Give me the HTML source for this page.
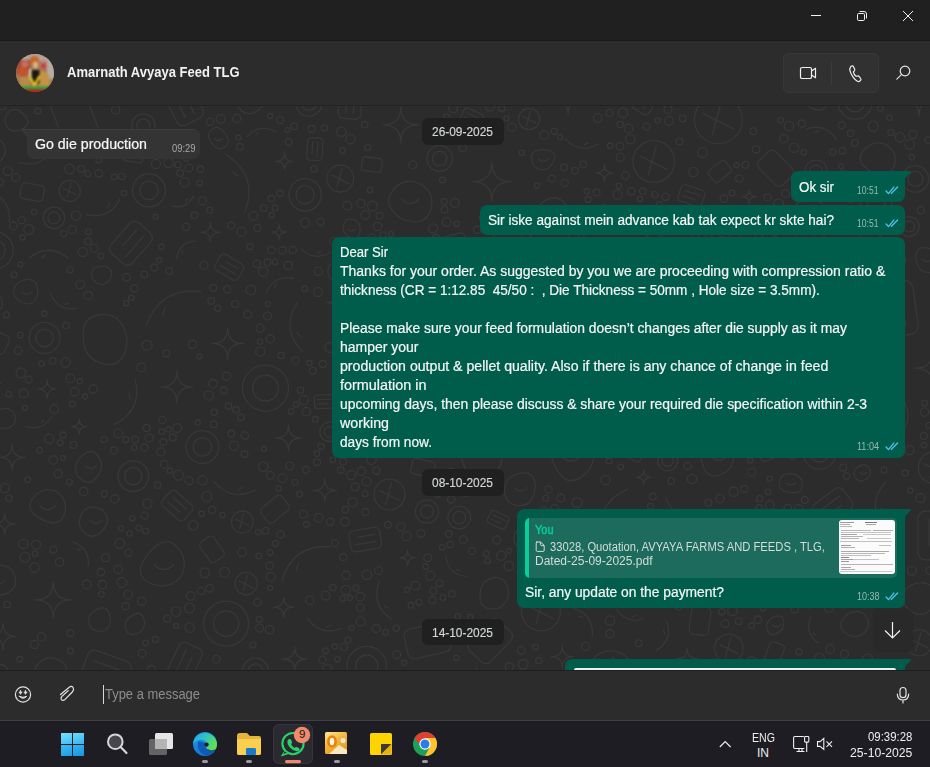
<!DOCTYPE html>
<html><head><meta charset="utf-8">
<style>
*{margin:0;padding:0;box-sizing:border-box}
html,body{width:930px;height:767px;overflow:hidden;background:#2b2b2b;font-family:"Liberation Sans",sans-serif;color:#e9edef;position:relative}
.a{position:absolute}
.t{position:absolute;white-space:pre;line-height:1;transform-origin:0 0}
.out{position:absolute;background:#005c4b;border-radius:7px}
.pill{position:absolute;background:#202020;border-radius:6px}
svg{position:absolute;overflow:visible}
</style></head>
<body>
<!-- title bar -->
<div class="a" style="left:0;top:0;width:930px;height:40px;background:#202020"></div>
<div class="a" style="left:0;top:40px;width:930px;height:1px;background:#1a1a1a"></div>
<svg style="left:0;top:0" width="930" height="40">
  <path d="M811 15.5 H821" stroke="#f2f2f2" stroke-width="1" fill="none"/>
  <rect x="857.5" y="13.5" width="7" height="7" rx="1.2" stroke="#f2f2f2" stroke-width="1" fill="none"/>
  <path d="M859.5 11.5 H864 Q866.5 11.5 866.5 14 V18.5" stroke="#f2f2f2" stroke-width="1" fill="none"/>
  <path d="M903 11 L913 21 M913 11 L903 21" stroke="#f2f2f2" stroke-width="1" fill="none"/>
</svg>

<!-- header -->
<div class="a" style="left:0;top:41px;width:930px;height:64px;background:#2c2c2c"></div>
<div class="a" style="left:0;top:105px;width:930px;height:1px;background:#222222"></div>
<div class="a" style="left:15.9px;top:53.5px;width:38.6px;height:38.6px;border-radius:50%;overflow:hidden;background:#9a7048">
  <svg style="left:0;top:0;filter:blur(0.9px)" width="39" height="39" viewBox="0 0 39 39">
    <rect x="-2" y="-2" width="43" height="43" fill="#a07a52"/>
    <rect x="-2" y="-2" width="43" height="9" fill="#b0a49a"/>
    <rect x="31" y="3" width="8" height="22" fill="#b4aca4"/>
    <rect x="0" y="6" width="14" height="14" fill="#a84c34"/>
    <circle cx="9" cy="10" r="3.5" fill="#c87060"/>
    <circle cx="7" cy="18" r="5" fill="#c2542e"/>
    <ellipse cx="18.5" cy="6" rx="4.5" ry="4" fill="#c8642c"/>
    <ellipse cx="19.5" cy="11" rx="2.5" ry="3.5" fill="#dcb488"/>
    <rect x="24" y="7" width="7" height="8" fill="#c47468"/>
    <circle cx="27.5" cy="12" r="2.5" fill="#b84040"/>
    <rect x="4" y="23" width="10" height="10" fill="#b88c48"/>
    <path d="M23 17 Q33 16 34 26 Q35 33 28 34 L23 34 Z" fill="#c49444"/>
    <rect x="13" y="15" width="2.6" height="8" fill="#e4d4c0"/>
    <path d="M15.5 16 H23.5 V29 Q19.5 31 15.5 29 Z" fill="#1c1610"/>
    <path d="M14 22.5 L18.4 31.5 L23.6 22" stroke="#e4c424" stroke-width="2.6" fill="none"/>
    <rect x="0" y="32" width="39" height="3.4" fill="#3e9c3e"/>
    <rect x="0" y="35.3" width="39" height="4" fill="#b81c1c"/>
  </svg>
</div>
<div class="a" style="left:783px;top:53px;width:96px;height:40px;background:#313131;border-radius:5px;border:1px solid #373737"></div>
<div class="a" style="left:831px;top:61px;width:1px;height:24px;background:#3c3c3c"></div>
<svg style="left:0;top:0" width="930" height="100">
  <rect x="800.5" y="67.5" width="11" height="11" rx="1.6" stroke="#f0f0f0" stroke-width="1.2" fill="none"/>
  <path d="M811.5 71 L815.5 68.3 V77.7 L811.5 75" stroke="#f0f0f0" stroke-width="1.2" fill="none" stroke-linejoin="round"/>
  <path transform="translate(849,65.3)" d="M2.6,0.7 C3.4,0.4 4.2,0.8 4.6,1.6 L5.6,3.8 C5.9,4.5 5.7,5.3 5.2,5.8 L4.4,6.5 C4.6,7.9 6.1,10.4 7.3,11.1 L8.4,10.7 C9.1,10.5 9.8,10.7 10.2,11.3 L11.6,13.2 C12.1,13.9 12,14.8 11.4,15.3 L10.9,15.7 C10.2,16.3 9.2,16.4 8.4,16 C5.5,14.6 2.2,9.6 1.1,5.9 C0.6,4.3 0.9,2.4 1.9,1.1 Z" stroke="#f0f0f0" stroke-width="1.2" fill="none"/>
  <circle cx="905" cy="71" r="4.8" stroke="#e8e8e8" stroke-width="1.2" fill="none"/>
  <path d="M901.6 74.4 L896.8 79.2" stroke="#e8e8e8" stroke-width="1.1" stroke-linecap="round"/>
</svg>

<!-- chat area -->
<div class="a" style="left:0;top:106px;width:930px;height:564px;background:#2c2c2c"></div>
<svg style="left:0;top:106px;overflow:hidden" width="930" height="564"><g fill="none" stroke="#383838" stroke-width="1.3" stroke-linecap="round" stroke-linejoin="round"><circle cx="133.3" cy="370.1" r="15.3"/><circle cx="133.3" cy="370.1" r="8.6"/><rect x="461.4" y="4.6" width="21.2" height="14.6" rx="3.3" transform="rotate(25 472.1 11.9)"/><path d="M465.0 9.5 H479.1 M465.0 14.3 H476.3" transform="rotate(25 472.1 11.9)"/><rect x="758.4" y="50.6" width="34.1" height="23.5" rx="5.3" transform="rotate(226 775.5 62.3)"/><circle cx="366.8" cy="560.1" r="19.8"/><circle cx="366.8" cy="560.1" r="11.1"/><path d="M96.2 161.3 Q101.8 158.8 107.2 161.3 Q112.6 163.8 111.4 169.3 Q110.2 174.8 106.1 177.2 Q102.0 179.6 97.5 177.5 Q93.0 175.4 91.8 169.6 Q90.6 163.8 96.2 161.3Z"/><path d="M288.4 319.1 Q288.4 332.0 301.3 332.0 Q288.4 332.0 288.4 344.8 Q288.4 332.0 275.6 332.0 Q288.4 332.0 288.4 319.1Z"/><path d="M654.0 114.9 Q654.0 132.6 671.7 132.6 Q654.0 132.6 654.0 150.2 Q654.0 132.6 636.4 132.6 Q654.0 132.6 654.0 114.9Z"/><path d="M83.7 222.9 Q85.9 210.1 100.7 208.5 Q115.5 206.8 122.7 219.5 Q129.9 232.2 125.0 246.4 Q120.0 260.6 105.8 258.3 Q91.5 256.1 86.5 245.9 Q81.5 235.6 83.7 222.9Z"/><path d="M516.2 260.5 Q537.6 236.6 565.6 252.3"/><path d="M531.0 258.1 L535.3 253.3"/><path d="M61.8 390.4 Q67.7 398.2 64.1 408.5 Q60.6 418.8 50.6 416.5 Q40.6 414.3 33.7 407.7 Q26.8 401.2 32.2 393.1 Q37.6 385.0 46.8 383.8 Q55.9 382.6 61.8 390.4Z"/><path d="M39.7 399.7 Q47.6 407.7 55.6 399.7"/><rect x="709.2" y="58.2" width="21.3" height="14.6" rx="3.3" transform="rotate(141 719.8 65.5)"/><path d="M425.7 300.5 Q425.1 318.1 407.7 321.3"/><path d="M420.3 306.7 L420.2 310.2"/><path d="M395.1 214.2 Q372.8 208.0 374.0 184.8"/><path d="M388.8 205.4 L384.3 204.2"/><path d="M210.4 116.7 Q210.4 126.3 219.9 126.3 Q210.4 126.3 210.4 135.8 Q210.4 126.3 200.8 126.3 Q210.4 126.3 210.4 116.7Z"/><rect x="-20.3" y="224.9" width="28.4" height="19.6" rx="4.4" transform="rotate(204 -6.1 234.7)"/><path d="M501.5 348.5 Q503.4 361.0 492.9 368.3 Q482.5 375.5 472.8 369.2 Q463.1 362.9 462.0 352.6 Q460.8 342.4 469.3 337.9 Q477.8 333.3 488.7 334.7 Q499.7 336.0 501.5 348.5Z"/><circle cx="54.0" cy="111.9" r="10.7"/><circle cx="54.0" cy="111.9" r="6.0"/><rect x="124.1" y="42.7" width="19.2" height="13.2" rx="3.0" transform="rotate(9 133.7 49.3)"/><rect x="110.7" y="123.3" width="40.8" height="28.1" rx="6.4" transform="rotate(131 131.1 137.3)"/><path d="M117.5 132.6 H144.7 M117.5 142.0 H139.3" transform="rotate(131 131.1 137.3)"/><path d="M933.4 243.7 Q933.4 262.1 951.9 262.1 Q933.4 262.1 933.4 280.5 Q933.4 262.1 915.0 262.1 Q933.4 262.1 933.4 243.7Z"/><path d="M329.6 146.7 Q313.9 155.9 301.4 142.6"/><path d="M321.1 145.4 L318.0 147.3"/><path d="M491.8 55.9 Q491.8 75.6 511.6 75.6 Q491.8 75.6 491.8 95.4 Q491.8 75.6 472.1 75.6 Q491.8 75.6 491.8 55.9Z"/><path d="M903.8 497.8 Q898.6 489.7 906.1 482.8 Q913.6 475.9 923.8 477.0 Q934.0 478.2 935.2 488.0 Q936.5 497.8 930.6 503.7 Q924.6 509.7 916.8 507.8 Q909.0 505.9 903.8 497.8Z"/><path d="M792.2 482.0 Q780.4 476.3 780.6 464.7 Q780.9 453.2 788.9 446.8 Q797.0 440.4 807.9 443.1 Q818.8 445.9 820.4 457.7 Q822.0 469.5 813.0 478.5 Q804.0 487.6 792.2 482.0Z"/><rect x="870.3" y="184.4" width="54.0" height="37.1" rx="8.4" transform="rotate(82 897.3 202.9)"/><path d="M879.3 196.8 H915.2 M879.3 209.1 H908.0" transform="rotate(82 897.3 202.9)"/><path d="M573.4 502.3 Q593.7 508.2 592.3 529.3"/><path d="M579.1 510.4 L583.1 511.6"/><path d="M733.2 408.9 Q733.2 428.1 752.4 428.1 Q733.2 428.1 733.2 447.3 Q733.2 428.1 714.0 428.1 Q733.2 428.1 733.2 408.9Z"/><path d="M282.0 474.8 Q292.2 438.6 329.8 440.6"/><path d="M296.3 464.5 L298.4 457.3"/><path d="M143.3 511.6 Q146.3 517.9 142.9 522.8 Q139.5 527.7 133.8 528.4 Q128.0 529.2 126.0 524.0 Q124.0 518.9 126.4 514.9 Q128.8 510.9 134.6 508.1 Q140.3 505.4 143.3 511.6Z"/><rect x="469.2" y="520.8" width="42.1" height="28.9" rx="6.6" transform="rotate(314 490.3 535.2)"/><rect x="215.9" y="151.9" width="26.6" height="18.3" rx="4.2" transform="rotate(211 229.2 161.1)"/><path d="M220.4 158.0 H238.1 M220.4 164.1 H234.6" transform="rotate(211 229.2 161.1)"/><circle cx="495.2" cy="295.7" r="18.4"/><circle cx="495.2" cy="295.7" r="10.4"/><path d="M749.2 83.4 Q749.2 90.7 756.5 90.7 Q749.2 90.7 749.2 97.9 Q749.2 90.7 742.0 90.7 Q749.2 90.7 749.2 83.4Z"/><path d="M883.1 420.8 Q866.4 397.3 885.8 375.9"/><path d="M883.9 407.3 L880.6 402.6"/><path d="M227.7 32.3 Q229.7 37.4 224.9 40.9 Q220.1 44.4 215.8 41.2 Q211.5 38.1 209.1 32.9 Q206.7 27.7 211.8 23.5 Q216.9 19.4 221.3 23.3 Q225.8 27.3 227.7 32.3Z"/><path d="M214.5 32.7 Q218.6 36.8 222.7 32.7"/><path d="M385.8 302.5 Q346.0 288.5 350.9 246.6"/><path d="M375.3 285.8 L367.4 282.9"/><circle cx="479.8" cy="188.0" r="17.2"/><path d="M469.1 183.7 L490.6 194.5 M475.5 198.8 L482.0 175.1"/><path d="M56.6 577.4 Q49.2 579.5 40.3 576.4 Q31.4 573.3 34.7 564.3 Q38.0 555.2 45.6 552.7 Q53.1 550.3 60.4 554.4 Q67.6 558.5 65.9 566.9 Q64.1 575.3 56.6 577.4Z"/><path d="M226.4 48.7 Q258.5 69.8 244.9 105.8"/><path d="M232.0 65.8 L238.4 70.0"/><path d="M53.3 475.4 Q53.3 493.9 71.8 493.9 Q53.3 493.9 53.3 512.4 Q53.3 493.9 34.8 493.9 Q53.3 493.9 53.3 475.4Z"/><circle cx="870.3" cy="146.4" r="19.3"/><circle cx="870.3" cy="146.4" r="10.9"/><circle cx="143.4" cy="19.4" r="11.5"/><circle cx="143.4" cy="19.4" r="6.5"/><circle cx="265.5" cy="282.1" r="23.0"/><circle cx="265.5" cy="282.1" r="12.9"/><path d="M4.6 407.6 Q4.6 418.1 15.1 418.1 Q4.6 418.1 4.6 428.6 Q4.6 418.1 -5.9 418.1 Q4.6 418.1 4.6 407.6Z"/><path d="M862.9 45.2 Q868.9 37.6 877.7 36.9 Q886.4 36.2 892.0 43.8 Q897.5 51.4 893.6 61.2 Q889.7 71.0 879.9 68.8 Q870.1 66.7 863.5 59.7 Q857.0 52.8 862.9 45.2Z"/><rect x="572.1" y="211.2" width="44.1" height="30.3" rx="6.9" transform="rotate(20 594.2 226.3)"/><path d="M579.5 221.3 H608.9 M579.5 231.4 H603.0" transform="rotate(20 594.2 226.3)"/><path d="M398.7 139.3 Q417.1 131.9 428.3 148.2"/><path d="M407.6 141.9 L411.3 140.5"/><circle cx="-5.3" cy="144.3" r="18.5"/><circle cx="-5.3" cy="144.3" r="10.4"/><path d="M279.0 118.5 Q279.0 126.0 286.5 126.0 Q279.0 126.0 279.0 133.5 Q279.0 126.0 271.5 126.0 Q279.0 126.0 279.0 118.5Z"/><path d="M601.6 433.5 Q594.4 397.7 627.8 382.8"/><path d="M609.4 418.3 L608.0 411.1"/><path d="M784.1 307.5 Q789.0 309.1 793.0 313.2 Q797.1 317.3 793.3 322.6 Q789.5 327.8 783.5 326.7 Q777.5 325.6 774.9 320.4 Q772.4 315.2 775.8 310.5 Q779.2 305.9 784.1 307.5Z"/><circle cx="242.3" cy="415.9" r="10.9"/><path d="M235.5 413.2 L249.1 420.0 M239.6 422.8 L243.6 407.7"/><path d="M719.6 369.1 Q709.1 372.6 704.2 362.7 Q699.2 352.7 702.2 342.6 Q705.2 332.4 715.1 333.8 Q725.0 335.3 730.2 341.8 Q735.4 348.3 732.7 356.9 Q730.0 365.5 719.6 369.1Z"/><path d="M710.5 350.3 Q718.6 358.4 726.7 350.3"/><circle cx="919.2" cy="536.8" r="13.1"/><path d="M911.0 533.5 L927.4 541.7 M915.9 545.0 L920.9 526.9"/><path d="M135.2 273.6 Q142.6 304.5 114.1 318.5"/><path d="M128.9 287.1 L130.4 293.2"/><rect x="814.0" y="388.0" width="37.1" height="25.5" rx="5.8" transform="rotate(323 832.5 400.7)"/><path d="M820.1 396.5 H844.9 M820.1 405.0 H839.9" transform="rotate(323 832.5 400.7)"/><path d="M-6.6 269.6 Q-6.6 277.2 0.9 277.2 Q-6.6 277.2 -6.6 284.7 Q-6.6 277.2 -14.1 277.2 Q-6.6 277.2 -6.6 269.6Z"/><path d="M52.4 42.2 Q41.6 62.7 19.3 56.6"/><path d="M42.5 46.5 L40.3 50.6"/><path d="M893.9 289.7 Q906.9 293.6 907.9 307.6 Q908.9 321.7 897.6 327.6 Q886.3 333.5 877.0 328.1 Q867.7 322.6 861.4 310.4 Q855.1 298.3 868.0 292.1 Q880.8 285.9 893.9 289.7Z"/><path d="M874.0 310.7 Q883.7 320.4 893.3 310.7"/><circle cx="149.0" cy="84.4" r="16.5"/><circle cx="149.0" cy="84.4" r="9.3"/><rect x="837.5" y="562.7" width="26.9" height="18.5" rx="4.2" transform="rotate(50 850.9 571.9)"/><path d="M842.0 568.9 H859.9 M842.0 575.0 H856.3" transform="rotate(50 850.9 571.9)"/><rect x="303.7" y="35.5" width="22.4" height="15.4" rx="3.5" transform="rotate(93 314.9 43.2)"/><path d="M307.4 40.6 H322.3 M307.4 45.8 H319.3" transform="rotate(93 314.9 43.2)"/><rect x="677.0" y="213.7" width="50.4" height="34.7" rx="7.9" transform="rotate(189 702.2 231.1)"/><path d="M685.4 225.3 H719.0 M685.4 236.8 H712.3" transform="rotate(189 702.2 231.1)"/><path d="M29.5 151.7 Q49.3 136.5 68.4 152.5"/><path d="M41.2 151.9 L45.1 148.9"/><rect x="789.0" y="101.9" width="41.4" height="28.4" rx="6.5" transform="rotate(89 809.7 116.1)"/><path d="M795.9 111.4 H823.5 M795.9 120.9 H818.0" transform="rotate(89 809.7 116.1)"/><path d="M840.9 249.8 Q840.9 266.4 857.5 266.4 Q840.9 266.4 840.9 283.0 Q840.9 266.4 824.3 266.4 Q840.9 266.4 840.9 249.8Z"/><path d="M870.7 492.8 Q854.0 472.3 870.3 451.5"/><path d="M870.6 480.4 L867.2 476.3"/><circle cx="653.7" cy="55.5" r="20.8"/><path d="M640.7 50.3 L666.7 63.3 M648.5 68.5 L656.3 39.9"/><circle cx="202.4" cy="341.0" r="16.4"/><circle cx="202.4" cy="341.0" r="9.2"/><path d="M255.1 384.2 Q230.8 396.3 213.6 375.2"/><path d="M242.7 381.5 L237.8 384.0"/><circle cx="389.5" cy="388.6" r="15.5"/><path d="M379.8 384.7 L399.2 394.5 M385.6 398.3 L391.5 377.0"/><rect x="166.5" y="543.7" width="37.0" height="25.4" rx="5.8" transform="rotate(295 185.0 556.4)"/><path d="M172.6 552.2 H197.3 M172.6 560.6 H192.4" transform="rotate(295 185.0 556.4)"/><path d="M718.9 177.8 Q700.0 167.4 706.0 146.7"/><path d="M715.0 168.5 L711.3 166.4"/><circle cx="915.4" cy="72.9" r="13.3"/><circle cx="915.4" cy="72.9" r="7.5"/><circle cx="305.1" cy="88.8" r="16.2"/><circle cx="305.1" cy="88.8" r="9.1"/><path d="M400.8 0.7 Q400.8 18.8 418.9 18.8 Q400.8 18.8 400.8 36.8 Q400.8 18.8 382.8 18.8 Q400.8 18.8 400.8 0.7Z"/><path d="M146.1 219.9 Q159.6 180.9 200.7 185.6"/><path d="M162.5 209.6 L165.2 201.8"/><circle cx="718.3" cy="13.7" r="23.9"/><path d="M703.4 7.8 L733.3 22.7 M712.4 28.7 L721.3 -4.2"/><rect x="685.8" y="505.0" width="28.2" height="19.4" rx="4.4" transform="rotate(98 699.9 514.8)"/><path d="M247.5 -20.2 Q255.4 -18.8 260.1 -14.6 Q264.7 -10.5 263.3 -3.6 Q261.9 3.4 254.0 6.6 Q246.1 9.9 239.8 3.0 Q233.6 -4.0 236.6 -12.8 Q239.5 -21.6 247.5 -20.2Z"/><path d="M246.2 -7.8 Q251.8 -2.1 257.5 -7.8"/><path d="M176.7 440.7 Q185.8 449.8 184.1 461.5 Q182.4 473.2 171.4 477.9 Q160.4 482.6 148.4 476.2 Q136.3 469.8 142.0 457.9 Q147.7 446.1 157.7 438.9 Q167.6 431.6 176.7 440.7Z"/><path d="M154.1 458.7 Q163.8 468.4 173.5 458.7"/><path d="M527.7 179.2 Q515.8 190.4 502.3 181.3"/><path d="M520.0 179.8 L517.7 182.1"/><path d="M302.9 245.9 Q280.4 223.6 297.1 196.8"/><path d="M301.2 231.1 L296.7 226.7"/><circle cx="610.7" cy="568.7" r="23.8"/><path d="M595.8 562.8 L625.6 577.7 M604.7 583.6 L613.6 550.8"/><path d="M119.9 92.8 Q109.6 114.1 86.6 108.6"/><path d="M109.9 97.6 L107.9 101.8"/><circle cx="728.9" cy="542.3" r="14.2"/><path d="M720.0 538.7 L737.7 547.6 M725.3 551.1 L730.7 531.7"/><circle cx="340.3" cy="72.6" r="13.4"/><path d="M331.9 69.2 L348.7 77.6 M336.9 81.0 L342.0 62.5"/><rect x="162.2" y="-17.8" width="42.1" height="29.0" rx="6.6" transform="rotate(244 183.3 -3.4)"/><path d="M169.2 -8.2 H197.3 M169.2 1.5 H191.7" transform="rotate(244 183.3 -3.4)"/><path d="M392.1 513.5 Q370.6 499.9 379.1 475.9"/><path d="M388.2 502.2 L383.9 499.5"/><path d="M9.5 321.4 Q3.7 323.8 -1.6 320.9 Q-6.9 318.0 -5.8 312.3 Q-4.6 306.7 -0.1 303.8 Q4.5 301.0 9.9 303.6 Q15.2 306.2 15.3 312.7 Q15.3 319.1 9.5 321.4Z"/><path d="M466.1 470.3 Q447.8 468.1 445.9 449.7"/><path d="M460.0 464.1 L456.4 463.7"/><rect x="724.1" y="111.2" width="24.8" height="17.1" rx="3.9" transform="rotate(305 736.5 119.7)"/><circle cx="524.2" cy="432.4" r="10.3"/><circle cx="524.2" cy="432.4" r="5.8"/><path d="M12.2 338.4 Q12.2 351.4 25.2 351.4 Q12.2 351.4 12.2 364.4 Q12.2 351.4 -0.8 351.4 Q12.2 351.4 12.2 338.4Z"/><circle cx="439.6" cy="52.5" r="12.8"/><circle cx="439.6" cy="52.5" r="7.2"/><path d="M803.0 583.3 Q796.6 580.9 793.1 575.1 Q789.7 569.3 794.4 563.7 Q799.2 558.1 804.9 561.1 Q810.6 564.1 814.2 569.1 Q817.7 574.0 813.6 579.9 Q809.4 585.7 803.0 583.3Z"/><circle cx="541.0" cy="505.4" r="19.4"/><path d="M528.9 500.6 L553.1 512.7 M536.2 517.5 L543.5 490.9"/><path d="M426.7 83.0 Q434.7 91.1 430.7 103.9 Q426.6 116.7 413.3 115.9 Q400.0 115.0 392.7 105.2 Q385.3 95.4 391.7 85.8 Q398.2 76.1 408.4 75.5 Q418.7 74.9 426.7 83.0Z"/><path d="M401.5 93.2 Q410.2 101.9 418.8 93.2"/><circle cx="-7.5" cy="197.3" r="10.0"/><circle cx="-7.5" cy="197.3" r="5.6"/><path d="M554.9 126.5 Q544.1 125.7 538.9 119.1 Q533.6 112.5 536.4 104.9 Q539.1 97.4 547.8 93.2 Q556.4 89.1 564.5 96.8 Q572.7 104.5 569.2 116.0 Q565.7 127.4 554.9 126.5Z"/><circle cx="226.1" cy="517.6" r="22.5"/><circle cx="226.1" cy="517.6" r="12.7"/><circle cx="599.5" cy="465.0" r="18.5"/><circle cx="599.5" cy="465.0" r="10.4"/><path d="M37.2 180.1 Q38.9 186.8 36.0 192.7 Q33.0 198.6 26.2 197.7 Q19.4 196.9 15.3 190.9 Q11.3 184.8 16.0 179.1 Q20.8 173.5 28.1 173.4 Q35.4 173.4 37.2 180.1Z"/><path d="M21.7 185.9 Q26.9 191.1 32.0 185.9"/><path d="M597.9 38.2 Q579.3 48.6 565.1 32.6"/><path d="M588.1 36.6 L584.3 38.6"/><path d="M18.2 4.4 Q23.5 7.2 26.6 11.9 Q29.7 16.7 25.4 20.8 Q21.0 25.0 14.6 25.0 Q8.1 24.9 5.8 18.3 Q3.5 11.7 8.2 6.6 Q12.8 1.5 18.2 4.4Z"/><path d="M818.1 536.9 Q804.1 527.0 810.7 511.1"/><path d="M815.9 529.2 L813.1 527.2"/><path d="M294.8 540.9 Q294.8 553.0 306.8 553.0 Q294.8 553.0 294.8 565.0 Q294.8 553.0 282.7 553.0 Q294.8 553.0 294.8 540.9Z"/><path d="M919.0 -24.7 Q919.0 -7.5 936.2 -7.5 Q919.0 -7.5 919.0 9.8 Q919.0 -7.5 901.7 -7.5 Q919.0 -7.5 919.0 -24.7Z"/><path d="M176.7 152.4 Q178.9 136.4 194.9 135.1"/><path d="M182.2 147.2 L182.6 144.0"/><path d="M779.4 375.4 Q780.8 368.8 786.6 367.8 Q792.3 366.7 797.2 369.4 Q802.2 372.1 802.4 378.9 Q802.6 385.7 796.0 386.5 Q789.5 387.3 783.7 384.6 Q778.0 381.9 779.4 375.4Z"/><path d="M786.3 376.7 Q791.0 381.3 795.6 376.7"/><circle cx="658.0" cy="482.7" r="14.9"/><circle cx="658.0" cy="482.7" r="8.4"/><path d="M227.6 221.9 Q227.6 237.4 243.1 237.4 Q227.6 237.4 227.6 252.9 Q227.6 237.4 212.0 237.4 Q227.6 237.4 227.6 221.9Z"/><path d="M533.5 295.5 Q539.8 295.2 543.2 299.6 Q546.5 304.1 545.7 310.4 Q544.8 316.6 538.6 315.9 Q532.5 315.1 528.0 311.6 Q523.6 308.1 525.5 302.0 Q527.3 295.8 533.5 295.5Z"/><path d="M531.6 306.0 Q535.8 310.2 540.1 306.0"/><rect x="83.3" y="549.1" width="46.0" height="31.7" rx="7.2" transform="rotate(20 106.3 564.9)"/><path d="M90.9 559.7 H121.6 M90.9 570.2 H115.5" transform="rotate(20 106.3 564.9)"/><rect x="636.3" y="184.0" width="34.0" height="23.4" rx="5.3" transform="rotate(81 653.3 195.6)"/><path d="M771.6 207.5 Q773.8 188.8 792.6 186.8"/><path d="M777.9 201.3 L778.3 197.6"/><path d="M783.3 514.0 Q784.5 518.9 782.6 522.4 Q780.6 525.9 775.4 528.1 Q770.2 530.3 767.6 524.8 Q765.1 519.2 768.4 515.1 Q771.7 511.0 776.9 510.1 Q782.0 509.1 783.3 514.0Z"/><path d="M772.5 519.0 Q776.5 523.0 780.5 519.0"/><rect x="199.8" y="435.0" width="24.2" height="16.7" rx="3.8" transform="rotate(55 212.0 443.4)"/><path d="M658.6 297.2 Q659.1 303.5 654.9 307.3 Q650.6 311.1 645.4 309.1 Q640.2 307.2 638.0 301.6 Q635.7 296.0 640.9 293.0 Q646.0 290.0 652.0 290.5 Q658.1 290.9 658.6 297.2Z"/><path d="M643.3 300.0 Q648.2 304.9 653.1 300.0"/><path d="M456.8 271.8 Q456.8 280.9 465.9 280.9 Q456.8 280.9 456.8 290.0 Q456.8 280.9 447.7 280.9 Q456.8 280.9 456.8 271.8Z"/><path d="M788.7 256.0 Q788.7 263.3 796.0 263.3 Q788.7 263.3 788.7 270.6 Q788.7 263.3 781.4 263.3 Q788.7 263.3 788.7 256.0Z"/><path d="M560.5 331.3 Q572.9 328.3 584.6 333.3 Q596.2 338.2 594.0 351.3 Q591.8 364.4 580.3 371.7 Q568.8 379.0 560.7 369.0 Q552.6 359.0 550.4 346.6 Q548.2 334.3 560.5 331.3Z"/><path d="M561.5 350.2 Q571.2 359.8 580.8 350.2"/><circle cx="529.1" cy="13.0" r="10.6"/><path d="M522.5 10.4 L535.7 17.0 M526.5 19.6 L530.5 5.1"/><circle cx="441.7" cy="230.9" r="26.9"/><circle cx="441.7" cy="230.9" r="15.1"/><circle cx="816.1" cy="65.3" r="11.2"/><circle cx="816.1" cy="65.3" r="6.3"/><rect x="405.5" y="519.3" width="44.2" height="30.4" rx="6.9" transform="rotate(347 427.6 534.5)"/><path d="M736.5 201.5 Q735.5 195.1 741.6 191.2 Q747.6 187.3 753.6 191.3 Q759.6 195.3 758.9 201.9 Q758.3 208.5 752.9 210.8 Q747.4 213.0 742.5 210.4 Q737.5 207.8 736.5 201.5Z"/><path d="M742.9 202.1 Q747.5 206.7 752.0 202.1"/><rect x="536.8" y="153.6" width="48.5" height="33.3" rx="7.6" transform="rotate(320 561.1 170.2)"/><path d="M544.9 164.7 H577.2 M544.9 175.8 H570.8" transform="rotate(320 561.1 170.2)"/><path d="M401.5 342.7 Q395.6 348.5 387.5 346.5 Q379.4 344.5 378.3 336.6 Q377.2 328.7 382.7 324.6 Q388.2 320.4 395.7 320.6 Q403.2 320.8 405.3 328.9 Q407.4 337.0 401.5 342.7Z"/><path d="M85.4 347.1 Q92.2 343.2 97.1 348.8 Q102.0 354.3 101.5 360.5 Q101.0 366.6 95.0 373.1 Q89.1 379.6 81.3 373.6 Q73.5 367.6 76.0 359.3 Q78.6 351.0 85.4 347.1Z"/><path d="M84.7 359.5 Q90.8 365.6 96.9 359.5"/><path d="M51.5 311.0 Q42.1 326.0 25.4 320.1"/><path d="M43.7 313.7 L41.8 316.7"/><path d="M341.3 522.3 Q320.3 530.7 307.5 512.1"/><path d="M331.2 519.3 L327.0 520.9"/><circle cx="909.1" cy="120.6" r="10.0"/><circle cx="909.1" cy="120.6" r="5.6"/><path d="M592.1 138.4 Q596.7 134.8 601.3 136.8 Q605.8 138.9 607.6 143.4 Q609.4 147.9 605.7 151.3 Q602.0 154.7 596.3 154.4 Q590.6 154.0 589.1 148.0 Q587.6 142.0 592.1 138.4Z"/><path d="M595.7 145.2 Q599.5 149.0 603.3 145.2"/><rect x="361.4" y="148.2" width="29.5" height="20.3" rx="4.6" transform="rotate(32 376.2 158.4)"/><path d="M366.4 155.0 H386.1 M366.4 161.8 H382.1" transform="rotate(32 376.2 158.4)"/><path d="M324.8 372.8 Q324.8 384.4 336.5 384.4 Q324.8 384.4 324.8 396.0 Q324.8 384.4 313.2 384.4 Q324.8 384.4 324.8 372.8Z"/><path d="M806.9 -12.6 Q811.0 -18.0 816.9 -17.7 Q822.8 -17.4 826.8 -12.5 Q830.8 -7.7 827.6 -1.5 Q824.5 4.6 817.8 4.0 Q811.2 3.4 807.0 -1.9 Q802.7 -7.3 806.9 -12.6Z"/><path d="M812.8 -7.5 Q817.3 -3.0 821.7 -7.5"/><circle cx="855.0" cy="-3.8" r="17.1"/><circle cx="855.0" cy="-3.8" r="9.6"/><circle cx="934.1" cy="361.7" r="15.8"/><path d="M924.2 357.8 L943.9 367.7 M930.1 371.6 L936.0 349.9"/><rect x="631.2" y="-18.0" width="30.0" height="20.6" rx="4.7" transform="rotate(303 646.2 -7.7)"/><path d="M636.2 -11.2 H656.2 M636.2 -4.3 H652.2" transform="rotate(303 646.2 -7.7)"/><path d="M176.8 264.7 Q176.8 280.8 192.8 280.8 Q176.8 280.8 176.8 296.8 Q176.8 280.8 160.8 280.8 Q176.8 280.8 176.8 264.7Z"/><path d="M562.4 539.4 Q562.4 550.7 573.6 550.7 Q562.4 550.7 562.4 561.9 Q562.4 550.7 551.2 550.7 Q562.4 550.7 562.4 539.4Z"/><path d="M283.7 491.1 Q283.7 501.2 293.8 501.2 Q283.7 501.2 283.7 511.3 Q283.7 501.2 273.6 501.2 Q283.7 501.2 283.7 491.1Z"/><circle cx="246.2" cy="477.6" r="11.2"/><path d="M239.2 474.8 L253.2 481.9 M243.4 484.7 L247.6 469.2"/><rect x="162.7" y="389.7" width="29.1" height="20.0" rx="4.5" transform="rotate(41 177.3 399.7)"/><path d="M167.6 396.4 H187.0 M167.6 403.1 H183.1" transform="rotate(41 177.3 399.7)"/><path d="M3.0 559.1 Q8.6 561.9 8.6 567.0 Q8.6 572.1 5.5 576.0 Q2.5 580.0 -2.5 578.2 Q-7.5 576.4 -8.0 571.5 Q-8.5 566.6 -5.5 561.4 Q-2.5 556.2 3.0 559.1Z"/><path d="M862.9 359.0 Q867.2 358.7 869.3 362.2 Q871.5 365.7 869.7 369.1 Q867.9 372.5 863.4 374.5 Q858.9 376.5 855.6 371.9 Q852.2 367.4 855.4 363.4 Q858.7 359.4 862.9 359.0Z"/><path d="M859.9 366.4 Q863.6 370.0 867.2 366.4"/><rect x="48.5" y="-5.0" width="53.3" height="36.7" rx="8.3" transform="rotate(69 75.2 13.3)"/><rect x="622.0" y="338.4" width="21.3" height="14.7" rx="3.3" transform="rotate(206 632.6 345.7)"/><circle cx="634.7" cy="251.2" r="12.9"/><circle cx="634.7" cy="251.2" r="7.3"/><path d="M494.2 128.4 Q494.2 136.9 502.7 136.9 Q494.2 136.9 494.2 145.4 Q494.2 136.9 485.8 136.9 Q494.2 136.9 494.2 128.4Z"/><rect x="261.6" y="394.0" width="26.7" height="18.4" rx="4.2" transform="rotate(320 274.9 403.1)"/><circle cx="819.4" cy="346.7" r="16.5"/><circle cx="819.4" cy="346.7" r="9.3"/><path d="M687.2 542.7 Q687.2 552.5 697.0 552.5 Q687.2 552.5 687.2 562.3 Q687.2 552.5 677.4 552.5 Q687.2 552.5 687.2 542.7Z"/><circle cx="44.6" cy="231.9" r="15.5"/><circle cx="44.6" cy="231.9" r="8.7"/><path d="M2.9 517.1 Q2.9 530.4 16.2 530.4 Q2.9 530.4 2.9 543.7 Q2.9 530.4 -10.4 530.4 Q2.9 530.4 2.9 517.1Z"/><path d="M673.5 424.5 Q678.7 430.6 677.2 437.1 Q675.8 443.5 669.8 446.7 Q663.9 449.9 656.9 446.1 Q649.9 442.2 653.3 435.5 Q656.8 428.7 662.5 423.6 Q668.3 418.4 673.5 424.5Z"/><path d="M660.6 435.8 Q665.9 441.1 671.2 435.8"/><path d="M47.2 274.1 Q47.2 283.1 56.1 283.1 Q47.2 283.1 47.2 292.1 Q47.2 283.1 38.2 283.1 Q47.2 283.1 47.2 274.1Z"/><rect x="689.7" y="460.7" width="28.6" height="19.7" rx="4.5" transform="rotate(119 704.0 470.5)"/><path d="M694.4 467.3 H713.5 M694.4 473.8 H709.7" transform="rotate(119 704.0 470.5)"/><circle cx="691.3" cy="282.4" r="12.2"/><circle cx="691.3" cy="282.4" r="6.9"/><path d="M643.7 364.1 Q643.7 371.4 651.1 371.4 Q643.7 371.4 643.7 378.8 Q643.7 371.4 636.4 371.4 Q643.7 371.4 643.7 364.1Z"/><path d="M753.1 282.6 Q753.1 294.5 765.0 294.5 Q753.1 294.5 753.1 306.4 Q753.1 294.5 741.1 294.5 Q753.1 294.5 753.1 282.6Z"/><path d="M496.4 217.5 Q496.4 228.8 507.8 228.8 Q496.4 228.8 496.4 240.2 Q496.4 228.8 485.1 228.8 Q496.4 228.8 496.4 217.5Z"/><path d="M72.7 436.1 Q90.0 441.8 88.2 459.9"/><path d="M77.4 443.2 L80.8 444.4"/><rect x="774.0" y="154.4" width="20.7" height="14.2" rx="3.2" transform="rotate(210 784.3 161.5)"/><path d="M777.4 159.1 H791.2 M777.4 163.9 H788.5" transform="rotate(210 784.3 161.5)"/><path d="M604.5 58.6 Q604.5 67.1 613.0 67.1 Q604.5 67.1 604.5 75.6 Q604.5 67.1 596.0 67.1 Q604.5 67.1 604.5 58.6Z"/><rect x="679.0" y="81.1" width="24.9" height="17.1" rx="3.9" transform="rotate(19 691.4 89.7)"/><path d="M683.1 86.8 H699.7 M683.1 92.5 H696.4" transform="rotate(19 691.4 89.7)"/><path d="M504.9 388.2 Q503.0 378.3 509.2 372.4 Q515.5 366.6 524.3 366.9 Q533.2 367.2 534.7 375.8 Q536.3 384.5 531.9 392.6 Q527.6 400.8 517.2 399.4 Q506.8 398.1 504.9 388.2Z"/><path d="M514.1 381.6 Q520.8 388.3 527.5 381.6"/><path d="M10.1 485.5 Q2.8 490.9 -3.8 487.4 Q-10.5 483.8 -13.0 477.4 Q-15.6 470.9 -10.6 464.5 Q-5.6 458.2 3.4 459.7 Q12.5 461.3 15.0 470.7 Q17.4 480.1 10.1 485.5Z"/><path d="M-7.4 474.9 Q-1.3 481.0 4.8 474.9"/><rect x="595.8" y="102.9" width="23.5" height="16.2" rx="3.7" transform="rotate(40 607.6 111.0)"/><path d="M334.6 156.0 Q341.1 154.0 344.1 158.8 Q347.2 163.6 346.7 168.0 Q346.3 172.3 342.1 174.1 Q337.9 175.9 332.8 173.7 Q327.6 171.4 327.9 164.7 Q328.1 158.1 334.6 156.0Z"/><rect x="910.2" y="412.8" width="48.7" height="33.5" rx="7.6" transform="rotate(90 934.6 429.6)"/><path d="M918.3 424.0 H950.8 M918.3 435.1 H944.3" transform="rotate(90 934.6 429.6)"/><path d="M-10.5 85.7 Q11.5 93.1 9.1 116.2"/><path d="M-4.6 94.8 L-0.2 96.3"/><circle cx="427.0" cy="405.5" r="11.6"/><circle cx="427.0" cy="405.5" r="6.5"/><path d="M776.6 -19.2 Q776.6 -9.9 786.0 -9.9 Q776.6 -9.9 776.6 -0.6 Q776.6 -9.9 767.3 -9.9 Q776.6 -9.9 776.6 -19.2Z"/><path d="M482.9 478.5 Q486.5 472.3 494.9 471.5 Q503.3 470.6 506.9 478.9 Q510.6 487.1 506.0 495.2 Q501.3 503.4 491.3 502.9 Q481.4 502.5 480.3 493.6 Q479.2 484.6 482.9 478.5Z"/><rect x="488.2" y="407.0" width="19.7" height="13.6" rx="3.1" transform="rotate(25 498.1 413.8)"/><path d="M491.5 411.5 H504.7 M491.5 416.0 H502.1" transform="rotate(25 498.1 413.8)"/><circle cx="69.7" cy="84.9" r="10.6"/><path d="M63.1 82.2 L76.3 88.8 M67.1 91.5 L71.1 77.0"/><path d="M537.2 62.2 Q531.6 59.0 531.4 52.1 Q531.3 45.1 537.6 44.1 Q543.9 43.1 550.1 44.8 Q556.2 46.5 554.5 52.8 Q552.7 59.1 547.7 62.3 Q542.7 65.5 537.2 62.2Z"/><path d="M538.5 53.0 Q543.4 57.9 548.2 53.0"/><rect x="411.5" y="354.0" width="22.9" height="15.7" rx="3.6" transform="rotate(13 422.9 361.9)"/><path d="M898.8 564.9 Q898.8 574.0 907.9 574.0 Q898.8 574.0 898.8 583.1 Q898.8 574.0 889.7 574.0 Q898.8 574.0 898.8 564.9Z"/><path d="M90.5 520.3 Q86.9 515.0 90.0 509.6 Q93.0 504.2 99.7 502.3 Q106.4 500.4 109.0 506.9 Q111.5 513.4 109.2 519.2 Q106.9 525.0 100.4 525.3 Q94.0 525.5 90.5 520.3Z"/><path d="M407.6 444.3 Q407.6 451.9 415.2 451.9 Q407.6 451.9 407.6 459.5 Q407.6 451.9 400.0 451.9 Q407.6 451.9 407.6 444.3Z"/><circle cx="459.2" cy="411.5" r="11.3"/><circle cx="459.2" cy="411.5" r="6.4"/><circle cx="876.1" cy="98.2" r="15.6"/><circle cx="876.1" cy="98.2" r="8.8"/><path d="M193.8 89.6 Q186.7 103.6 171.4 99.8"/><path d="M187.1 92.6 L185.6 95.4"/><path d="M266.2 186.1 Q274.7 168.3 294.0 172.7"/><path d="M274.5 182.1 L276.2 178.5"/><rect x="333.9" y="-14.8" width="32.9" height="22.6" rx="5.1" transform="rotate(274 350.3 -3.5)"/><path d="M339.3 -7.3 H361.3 M339.3 0.2 H356.9" transform="rotate(274 350.3 -3.5)"/><path d="M359.2 118.8 Q361.2 123.6 359.0 128.7 Q356.8 133.9 351.7 132.0 Q346.7 130.2 344.4 126.4 Q342.0 122.6 344.0 117.5 Q345.9 112.5 351.6 113.2 Q357.2 114.0 359.2 118.8Z"/><path d="M347.3 123.1 Q351.3 127.0 355.3 123.1"/><circle cx="-8.0" cy="44.6" r="13.3"/><circle cx="-8.0" cy="44.6" r="7.5"/><circle cx="843.6" cy="187.9" r="13.2"/><circle cx="843.6" cy="187.9" r="7.4"/><rect x="443.8" y="128.6" width="22.2" height="15.3" rx="3.5" transform="rotate(166 454.9 136.2)"/><path d="M447.5 133.7 H462.3 M447.5 138.8 H459.3" transform="rotate(166 454.9 136.2)"/><path d="M758.6 499.8 Q734.8 489.9 739.3 464.5"/><path d="M752.8 489.2 L748.1 487.2"/><rect x="586.8" y="273.8" width="33.1" height="22.8" rx="5.2" transform="rotate(218 603.3 285.1)"/><circle cx="308.9" cy="-3.0" r="13.2"/><circle cx="308.9" cy="-3.0" r="7.4"/><rect x="349.9" y="423.0" width="30.9" height="21.2" rx="4.8" transform="rotate(171 365.3 433.6)"/><path d="M355.0 430.1 H375.6 M355.0 437.2 H371.5" transform="rotate(171 365.3 433.6)"/><rect x="20.7" y="78.0" width="23.2" height="15.9" rx="3.6" transform="rotate(190 32.3 86.0)"/><circle cx="562.1" cy="446.6" r="12.1"/><path d="M554.5 443.6 L569.7 451.2 M559.1 454.2 L563.6 437.5"/><path d="M104.0 405.6 Q108.4 410.5 107.0 417.0 Q105.6 423.4 98.2 428.2 Q90.9 433.1 83.9 426.0 Q77.0 419.0 80.4 410.4 Q83.9 401.8 91.7 401.2 Q99.5 400.6 104.0 405.6Z"/><path d="M89.7 413.9 Q96.0 420.2 102.4 413.9"/><path d="M76.1 202.5 Q56.8 204.9 50.2 186.6"/><path d="M68.3 197.7 L64.5 198.2"/><path d="M79.3 313.0 Q79.3 320.5 86.8 320.5 Q79.3 320.5 79.3 328.1 Q79.3 320.5 71.7 320.5 Q79.3 320.5 79.3 313.0Z"/><circle cx="255.5" cy="565.1" r="12.9"/><circle cx="255.5" cy="565.1" r="7.2"/><path d="M568.1 -21.2 Q568.1 -6.6 582.7 -6.6 Q568.1 -6.6 568.1 8.1 Q568.1 -6.6 553.4 -6.6 Q568.1 -6.6 568.1 -21.2Z"/><path d="M666.8 515.4 Q673.0 534.4 655.9 544.7"/><path d="M663.5 524.2 L664.7 528.0"/><path d="M827.4 313.7 Q810.1 316.6 803.5 300.4"/><path d="M820.2 309.7 L816.8 310.3"/><rect x="314.4" y="288.9" width="19.6" height="13.5" rx="3.1" transform="rotate(358 324.2 295.6)"/><path d="M317.6 293.4 H330.7 M317.6 297.9 H328.1" transform="rotate(358 324.2 295.6)"/><path d="M643.8 512.3 Q626.7 518.7 616.7 503.4"/><path d="M635.6 509.6 L632.2 510.9"/><path d="M246.7 31.1 Q259.3 16.8 276.0 26.0"/><path d="M255.5 29.6 L258.0 26.7"/><circle cx="329.4" cy="325.9" r="9.7"/><circle cx="329.4" cy="325.9" r="5.4"/><path d="M806.1 23.0 Q825.4 16.2 836.3 33.6"/><path d="M815.1 26.1 L819.0 24.8"/><rect x="747.7" y="224.9" width="27.3" height="18.7" rx="4.3" transform="rotate(316 761.4 234.3)"/><path d="M752.3 231.2 H770.5 M752.3 237.4 H766.8" transform="rotate(316 761.4 234.3)"/><path d="M476.8 561.3 Q472.0 579.8 452.8 579.2"/><path d="M469.6 566.6 L468.7 570.4"/><path d="M924.4 141.7 Q931.2 142.1 937.3 146.4 Q943.4 150.6 940.5 158.6 Q937.6 166.6 929.6 166.6 Q921.5 166.6 918.2 160.7 Q914.9 154.8 916.2 148.0 Q917.5 141.2 924.4 141.7Z"/><path d="M921.5 153.0 Q926.9 158.4 932.2 153.0"/><path d="M284.5 46.8 Q284.5 55.3 293.1 55.3 Q284.5 55.3 284.5 63.8 Q284.5 55.3 276.0 55.3 Q284.5 55.3 284.5 46.8Z"/><path d="M854.2 505.7 Q861.2 504.4 865.9 510.2 Q870.6 516.0 867.4 522.6 Q864.2 529.3 857.1 530.2 Q850.0 531.2 844.1 525.7 Q838.2 520.1 842.7 513.6 Q847.3 507.1 854.2 505.7Z"/><rect x="427.0" y="156.7" width="27.2" height="18.7" rx="4.2" transform="rotate(282 440.6 166.1)"/><path d="M431.5 163.0 H449.6 M431.5 169.2 H446.0" transform="rotate(282 440.6 166.1)"/><path d="M764.1 174.3 Q748.6 170.7 748.8 154.8"/><path d="M759.5 168.5 L756.4 167.7"/><rect x="361.9" y="51.8" width="20.0" height="13.7" rx="3.1" transform="rotate(7 371.9 58.6)"/><circle cx="667.7" cy="354.8" r="10.0"/><circle cx="667.7" cy="354.8" r="5.6"/><path d="M696.7 411.0 Q673.4 413.6 665.7 391.4"/><path d="M687.4 405.1 L682.8 405.6"/><path d="M334.6 188.4 Q334.6 196.4 342.6 196.4 Q334.6 196.4 334.6 204.4 Q334.6 196.4 326.6 196.4 Q334.6 196.4 334.6 188.4Z"/><rect x="762.9" y="540.3" width="22.8" height="15.7" rx="3.6" transform="rotate(290 774.3 548.2)"/><rect x="755.1" y="336.3" width="21.7" height="14.9" rx="3.4" transform="rotate(252 765.9 343.7)"/><circle cx="275.1" cy="101.9" r="2.9"/><circle cx="898.1" cy="465.8" r="4.6"/><circle cx="420.9" cy="427.5" r="3.9"/><circle cx="370.2" cy="83.9" r="2.8"/><circle cx="526.9" cy="230.5" r="2.6"/><circle cx="288.3" cy="159.5" r="4.2"/><circle cx="23.6" cy="287.4" r="4.4"/><circle cx="23.4" cy="438.0" r="4.7"/><circle cx="0.0" cy="76.2" r="3.4"/><circle cx="41.5" cy="530.9" r="4.2"/><circle cx="511.8" cy="21.2" r="4.1"/><circle cx="446.6" cy="115.9" r="4.3"/><circle cx="65.6" cy="256.3" r="4.8"/><circle cx="501.2" cy="449.7" r="4.7"/><circle cx="34.2" cy="106.0" r="2.8"/><circle cx="271.4" cy="144.0" r="3.7"/><circle cx="304.7" cy="182.8" r="2.9"/><circle cx="28.6" cy="273.6" r="3.5"/><circle cx="84.9" cy="290.5" r="2.5"/><circle cx="464.9" cy="386.2" r="4.2"/><circle cx="357.0" cy="183.5" r="2.5"/><circle cx="472.0" cy="444.8" r="3.5"/><circle cx="80.1" cy="178.5" r="4.4"/><circle cx="830.1" cy="543.2" r="4.3"/><circle cx="188.9" cy="62.0" r="3.9"/><circle cx="652.8" cy="390.4" r="3.3"/><circle cx="325.4" cy="544.8" r="2.9"/><circle cx="759.8" cy="563.9" r="4.0"/><circle cx="650.5" cy="400.3" r="3.0"/><circle cx="180.1" cy="67.0" r="3.4"/><circle cx="442.5" cy="74.0" r="2.9"/><circle cx="891.0" cy="26.5" r="3.1"/><circle cx="442.3" cy="441.4" r="2.8"/><circle cx="168.7" cy="56.9" r="4.8"/><circle cx="160.8" cy="345.9" r="4.1"/><circle cx="726.7" cy="299.5" r="4.8"/><circle cx="332.9" cy="353.9" r="2.8"/><circle cx="352.8" cy="396.3" r="4.7"/><circle cx="685.4" cy="163.7" r="2.5"/><circle cx="615.6" cy="196.3" r="4.9"/><circle cx="256.9" cy="157.9" r="3.8"/><circle cx="169.1" cy="164.9" r="3.3"/><circle cx="176.1" cy="520.0" r="2.5"/><circle cx="442.9" cy="491.5" r="2.8"/><circle cx="13.4" cy="119.9" r="3.9"/><circle cx="294.2" cy="20.3" r="3.3"/><circle cx="324.5" cy="22.0" r="3.1"/><circle cx="422.0" cy="179.4" r="4.1"/><circle cx="411.9" cy="172.7" r="3.5"/><circle cx="433.4" cy="485.0" r="3.4"/><circle cx="738.7" cy="515.2" r="3.3"/><circle cx="664.2" cy="323.9" r="4.6"/><circle cx="632.1" cy="284.0" r="3.0"/><circle cx="709.1" cy="118.3" r="3.3"/><circle cx="53.3" cy="443.8" r="3.4"/><circle cx="296.0" cy="298.6" r="2.7"/><circle cx="646.7" cy="20.6" r="3.5"/><circle cx="124.0" cy="87.0" r="2.7"/><circle cx="384.0" cy="239.4" r="3.2"/><circle cx="544.1" cy="29.2" r="4.4"/><circle cx="81.3" cy="63.1" r="3.4"/><circle cx="538.9" cy="554.5" r="3.2"/><circle cx="884.0" cy="364.0" r="2.9"/><circle cx="407.2" cy="483.7" r="2.6"/><circle cx="316.8" cy="347.7" r="2.8"/><circle cx="553.4" cy="220.6" r="3.4"/><circle cx="21.7" cy="114.2" r="3.5"/><circle cx="841.3" cy="79.5" r="2.9"/><circle cx="487.7" cy="454.9" r="2.8"/><circle cx="693.5" cy="66.0" r="4.6"/><circle cx="573.2" cy="265.2" r="3.1"/><circle cx="605.3" cy="310.5" r="3.0"/><circle cx="126.1" cy="197.3" r="2.6"/><circle cx="436.4" cy="294.6" r="4.4"/><circle cx="675.5" cy="300.9" r="4.5"/><circle cx="259.5" cy="522.1" r="3.9"/><circle cx="770.2" cy="142.6" r="4.4"/><circle cx="850.7" cy="27.2" r="3.2"/><circle cx="98.9" cy="67.3" r="3.7"/><circle cx="269.6" cy="459.7" r="3.7"/><circle cx="680.9" cy="195.6" r="3.5"/><circle cx="69.6" cy="63.0" r="4.9"/><circle cx="329.8" cy="241.5" r="5.0"/><circle cx="499.3" cy="34.0" r="2.5"/><circle cx="263.3" cy="360.6" r="4.8"/><circle cx="761.3" cy="108.4" r="2.6"/><circle cx="278.6" cy="382.5" r="2.7"/><circle cx="270.2" cy="233.0" r="4.0"/><circle cx="178.4" cy="369.3" r="4.9"/><circle cx="258.1" cy="426.0" r="2.7"/><circle cx="226.6" cy="270.2" r="4.1"/><circle cx="199.4" cy="250.4" r="2.5"/><circle cx="34.5" cy="461.5" r="4.7"/><circle cx="691.9" cy="154.8" r="2.6"/><circle cx="762.8" cy="502.4" r="2.6"/><circle cx="618.1" cy="160.1" r="2.7"/><circle cx="75.9" cy="109.5" r="4.6"/><circle cx="18.1" cy="244.6" r="3.8"/><circle cx="841.7" cy="210.5" r="3.8"/><circle cx="433.1" cy="122.3" r="4.5"/><circle cx="586.8" cy="85.3" r="2.8"/><circle cx="600.9" cy="175.7" r="4.1"/><circle cx="833.7" cy="429.8" r="4.0"/><circle cx="69.4" cy="376.3" r="2.9"/><circle cx="241.5" cy="125.7" r="4.5"/><circle cx="610.1" cy="39.8" r="2.8"/><circle cx="654.2" cy="329.5" r="3.4"/><circle cx="159.3" cy="30.0" r="2.6"/><circle cx="15.8" cy="71.6" r="3.9"/><circle cx="376.3" cy="364.8" r="3.7"/><circle cx="361.6" cy="235.1" r="2.6"/><circle cx="778.6" cy="97.7" r="4.9"/><circle cx="214.2" cy="306.3" r="3.1"/><circle cx="270.0" cy="446.5" r="2.7"/><circle cx="920.2" cy="392.1" r="4.6"/><circle cx="911.8" cy="464.6" r="4.5"/><circle cx="155.4" cy="533.5" r="3.1"/><circle cx="630.3" cy="33.1" r="4.7"/><circle cx="535.6" cy="541.1" r="2.8"/><circle cx="532.9" cy="335.7" r="4.3"/><circle cx="408.6" cy="266.0" r="4.7"/><circle cx="391.2" cy="127.9" r="2.5"/><circle cx="376.3" cy="522.5" r="4.0"/><circle cx="134.2" cy="182.3" r="3.7"/><circle cx="628.6" cy="22.4" r="4.4"/><circle cx="479.4" cy="152.6" r="3.3"/><circle cx="176.0" cy="505.5" r="4.8"/><circle cx="539.2" cy="468.4" r="3.3"/><circle cx="618.9" cy="174.1" r="4.0"/><circle cx="875.6" cy="249.9" r="3.5"/><circle cx="383.2" cy="128.8" r="3.0"/><circle cx="204.8" cy="466.8" r="4.8"/><circle cx="824.3" cy="236.4" r="4.4"/><circle cx="176.1" cy="42.5" r="4.7"/><circle cx="501.7" cy="2.5" r="3.1"/><circle cx="783.8" cy="32.7" r="4.2"/><circle cx="49.0" cy="332.8" r="4.6"/><circle cx="517.7" cy="345.5" r="3.8"/><circle cx="36.1" cy="438.6" r="4.5"/><circle cx="896.6" cy="513.0" r="3.3"/><circle cx="554.6" cy="402.6" r="4.0"/><circle cx="924.1" cy="339.1" r="2.7"/><circle cx="202.5" cy="374.2" r="4.6"/><circle cx="813.2" cy="243.6" r="3.9"/><circle cx="841.4" cy="313.0" r="2.7"/><circle cx="144.2" cy="168.6" r="3.4"/><circle cx="113.6" cy="30.3" r="3.2"/><circle cx="739.3" cy="72.6" r="3.7"/><circle cx="74.7" cy="285.8" r="4.2"/><circle cx="881.3" cy="540.3" r="4.7"/><circle cx="279.8" cy="87.3" r="3.2"/><circle cx="669.0" cy="15.0" r="4.4"/><circle cx="432.0" cy="340.2" r="3.0"/><circle cx="462.6" cy="41.7" r="3.7"/><circle cx="692.0" cy="373.0" r="4.7"/><circle cx="63.2" cy="329.0" r="3.0"/><circle cx="318.8" cy="411.8" r="4.4"/><circle cx="312.8" cy="264.8" r="3.5"/><circle cx="683.7" cy="343.3" r="2.5"/><circle cx="666.2" cy="260.5" r="2.9"/><circle cx="100.9" cy="466.2" r="3.7"/><circle cx="839.1" cy="160.5" r="4.0"/><circle cx="244.8" cy="329.6" r="3.8"/><circle cx="721.7" cy="505.8" r="3.1"/><circle cx="874.5" cy="441.9" r="2.9"/><circle cx="688.0" cy="329.8" r="4.6"/><circle cx="66.1" cy="219.6" r="3.2"/><circle cx="891.8" cy="274.9" r="2.6"/><circle cx="768.5" cy="269.5" r="3.2"/><circle cx="898.2" cy="257.1" r="2.5"/><circle cx="751.9" cy="366.2" r="4.0"/><circle cx="470.2" cy="510.9" r="2.6"/><circle cx="222.5" cy="409.1" r="2.7"/><circle cx="342.5" cy="492.7" r="2.7"/><circle cx="345.4" cy="403.8" r="3.3"/><circle cx="234.0" cy="339.8" r="4.7"/><circle cx="719.9" cy="392.6" r="4.2"/><circle cx="186.1" cy="120.8" r="3.7"/><circle cx="20.4" cy="158.5" r="2.5"/><circle cx="346.9" cy="232.5" r="4.6"/><circle cx="521.4" cy="211.0" r="2.5"/><circle cx="808.4" cy="498.9" r="3.1"/><circle cx="538.8" cy="209.7" r="3.2"/><circle cx="343.9" cy="541.0" r="3.7"/><circle cx="224.0" cy="284.3" r="3.3"/><circle cx="59.6" cy="456.1" r="4.2"/><circle cx="905.3" cy="367.1" r="3.1"/><circle cx="610.0" cy="514.5" r="4.7"/><circle cx="121.7" cy="70.4" r="3.2"/><circle cx="365.4" cy="108.9" r="4.3"/><circle cx="583.4" cy="58.4" r="3.3"/><circle cx="209.7" cy="482.3" r="3.7"/><circle cx="613.4" cy="493.7" r="4.7"/><circle cx="923.8" cy="330.1" r="3.5"/><circle cx="777.4" cy="429.1" r="3.1"/><circle cx="444.2" cy="95.5" r="3.1"/><circle cx="311.5" cy="22.8" r="3.4"/><circle cx="830.6" cy="86.3" r="4.5"/><circle cx="564.8" cy="76.9" r="3.6"/><circle cx="270.1" cy="10.1" r="2.6"/><circle cx="845.3" cy="326.3" r="3.2"/><circle cx="102.4" cy="478.7" r="4.2"/><circle cx="119.8" cy="437.6" r="4.9"/><circle cx="723.9" cy="281.3" r="4.3"/><circle cx="258.7" cy="450.0" r="2.9"/><circle cx="751.5" cy="554.8" r="4.2"/><circle cx="665.5" cy="90.8" r="3.7"/><circle cx="859.9" cy="421.0" r="2.8"/><circle cx="488.0" cy="159.1" r="4.7"/><circle cx="216.5" cy="553.2" r="3.8"/><circle cx="596.6" cy="86.3" r="3.5"/><circle cx="794.7" cy="503.1" r="3.8"/><circle cx="623.0" cy="6.7" r="4.8"/><circle cx="439.4" cy="477.2" r="3.4"/><circle cx="82.8" cy="146.2" r="4.5"/><circle cx="667.7" cy="287.3" r="4.4"/><circle cx="144.5" cy="409.5" r="3.6"/><circle cx="396.6" cy="235.7" r="3.5"/><circle cx="812.4" cy="159.8" r="4.3"/><circle cx="151.4" cy="563.7" r="4.2"/><circle cx="275.3" cy="437.6" r="3.1"/><circle cx="742.3" cy="150.2" r="3.0"/><circle cx="841.0" cy="60.1" r="2.5"/><circle cx="303.8" cy="294.0" r="4.6"/><circle cx="448.8" cy="428.0" r="3.3"/><circle cx="353.7" cy="200.0" r="3.2"/><circle cx="483.6" cy="35.0" r="2.6"/><circle cx="142.0" cy="547.2" r="3.9"/><circle cx="309.5" cy="257.0" r="2.6"/><circle cx="804.1" cy="211.7" r="3.2"/><circle cx="768.1" cy="385.9" r="2.7"/><circle cx="804.8" cy="394.0" r="3.3"/><circle cx="405.1" cy="290.6" r="3.8"/><circle cx="708.4" cy="192.2" r="4.8"/><circle cx="628.6" cy="181.0" r="4.1"/><circle cx="723.9" cy="92.6" r="3.8"/><circle cx="340.8" cy="364.1" r="3.3"/><circle cx="441.8" cy="332.0" r="4.0"/><circle cx="155.9" cy="57.9" r="4.6"/><circle cx="468.2" cy="315.6" r="2.6"/><circle cx="619.9" cy="40.3" r="3.8"/><circle cx="367.7" cy="41.4" r="3.1"/><circle cx="83.7" cy="385.5" r="4.2"/><circle cx="588.1" cy="93.5" r="3.0"/><circle cx="490.1" cy="0.2" r="4.6"/><circle cx="70.0" cy="163.9" r="3.0"/><circle cx="231.3" cy="119.4" r="3.5"/><circle cx="288.6" cy="36.0" r="3.3"/><circle cx="887.3" cy="241.8" r="3.1"/><circle cx="451.8" cy="487.9" r="3.2"/><circle cx="197.7" cy="316.6" r="2.6"/><circle cx="618.3" cy="324.7" r="4.4"/><circle cx="784.5" cy="142.0" r="3.3"/><circle cx="853.0" cy="81.6" r="3.0"/><circle cx="177.1" cy="322.0" r="4.5"/><circle cx="320.3" cy="115.8" r="3.6"/><circle cx="189.4" cy="502.0" r="4.9"/><circle cx="912.9" cy="28.6" r="4.0"/><circle cx="146.7" cy="322.1" r="3.6"/><circle cx="477.3" cy="123.8" r="3.8"/><circle cx="846.7" cy="370.1" r="3.2"/><circle cx="563.9" cy="61.3" r="3.4"/><circle cx="355.2" cy="381.0" r="3.8"/><circle cx="741.3" cy="246.9" r="4.6"/><circle cx="890.2" cy="258.3" r="3.9"/><circle cx="860.9" cy="435.7" r="2.5"/><circle cx="260.1" cy="222.2" r="4.0"/><circle cx="920.9" cy="104.2" r="3.6"/><circle cx="521.7" cy="46.7" r="2.6"/><circle cx="209.7" cy="104.1" r="3.0"/><circle cx="224.5" cy="466.3" r="5.0"/><circle cx="620.2" cy="18.5" r="3.1"/><circle cx="188.3" cy="36.3" r="3.3"/><circle cx="378.5" cy="464.6" r="3.9"/><circle cx="380.0" cy="227.5" r="3.9"/><circle cx="632.5" cy="212.4" r="3.0"/><circle cx="201.7" cy="407.8" r="2.8"/><circle cx="271.4" cy="92.6" r="3.2"/><circle cx="35.1" cy="447.6" r="2.8"/><circle cx="249.9" cy="140.6" r="3.0"/><circle cx="696.8" cy="308.0" r="4.0"/><circle cx="321.1" cy="340.5" r="3.0"/><circle cx="759.6" cy="457.7" r="2.8"/><circle cx="694.7" cy="184.9" r="4.7"/><circle cx="495.4" cy="267.1" r="2.7"/><circle cx="270.2" cy="481.8" r="2.5"/><circle cx="427.1" cy="194.7" r="3.4"/><circle cx="441.0" cy="373.8" r="4.5"/><circle cx="27.6" cy="373.6" r="2.8"/><circle cx="317.1" cy="356.3" r="3.4"/><circle cx="427.7" cy="451.7" r="3.9"/><circle cx="352.4" cy="212.6" r="3.6"/><circle cx="267.4" cy="156.6" r="3.4"/><circle cx="385.6" cy="526.3" r="2.9"/><circle cx="147.1" cy="239.3" r="5.0"/><circle cx="437.6" cy="387.7" r="3.5"/><circle cx="351.2" cy="369.1" r="4.6"/><circle cx="54.4" cy="303.2" r="4.3"/><circle cx="189.7" cy="521.5" r="4.8"/><circle cx="341.5" cy="216.3" r="3.2"/><circle cx="617.9" cy="150.9" r="3.7"/><circle cx="118.2" cy="327.4" r="4.5"/><circle cx="483.6" cy="250.5" r="2.6"/><circle cx="787.7" cy="402.1" r="3.7"/><circle cx="190.6" cy="489.9" r="4.3"/><circle cx="842.3" cy="44.7" r="3.3"/><circle cx="769.8" cy="399.2" r="4.4"/><circle cx="867.6" cy="552.7" r="4.8"/><circle cx="269.5" cy="523.7" r="4.2"/><circle cx="794.0" cy="41.8" r="4.7"/><circle cx="824.0" cy="208.0" r="2.9"/><circle cx="511.1" cy="254.6" r="3.2"/><circle cx="52.7" cy="254.9" r="3.3"/><circle cx="451.2" cy="334.1" r="3.1"/><circle cx="169.8" cy="364.7" r="2.7"/><circle cx="909.4" cy="344.0" r="4.5"/><circle cx="271.6" cy="109.1" r="2.6"/><circle cx="287.6" cy="24.1" r="2.5"/><circle cx="242.1" cy="446.2" r="4.4"/><circle cx="707.5" cy="103.7" r="3.8"/><circle cx="554.3" cy="25.4" r="3.1"/><circle cx="560.7" cy="392.0" r="4.0"/><circle cx="898.3" cy="446.9" r="4.2"/><circle cx="101.0" cy="149.9" r="2.8"/><circle cx="554.7" cy="468.1" r="4.9"/><circle cx="401.3" cy="223.4" r="2.8"/><circle cx="685.4" cy="311.6" r="3.9"/><circle cx="2.2" cy="0.2" r="3.6"/><circle cx="28.7" cy="123.4" r="4.9"/><circle cx="260.3" cy="245.5" r="4.6"/><circle cx="668.0" cy="3.4" r="4.0"/><circle cx="481.3" cy="385.9" r="3.3"/><circle cx="270.7" cy="470.8" r="4.4"/><circle cx="253.3" cy="109.8" r="4.5"/><circle cx="626.4" cy="486.5" r="4.8"/><circle cx="774.9" cy="126.7" r="3.3"/><circle cx="134.3" cy="341.6" r="2.7"/><circle cx="812.5" cy="225.4" r="4.2"/><circle cx="734.7" cy="150.6" r="2.5"/><circle cx="781.5" cy="288.4" r="4.6"/><circle cx="732.1" cy="87.0" r="2.9"/><circle cx="270.4" cy="369.2" r="3.9"/><circle cx="126.5" cy="171.2" r="3.8"/><circle cx="422.9" cy="285.7" r="4.8"/><circle cx="365.0" cy="323.4" r="4.3"/><circle cx="496.8" cy="434.0" r="4.0"/><circle cx="831.1" cy="230.7" r="2.5"/><circle cx="688.9" cy="439.2" r="2.7"/><circle cx="451.2" cy="393.3" r="3.7"/><circle cx="713.2" cy="279.0" r="4.8"/><circle cx="72.4" cy="298.1" r="2.9"/><circle cx="400.8" cy="420.9" r="4.1"/><circle cx="523.2" cy="558.3" r="4.8"/><circle cx="901.1" cy="140.1" r="2.9"/><circle cx="457.7" cy="510.4" r="2.7"/><circle cx="448.6" cy="315.0" r="4.3"/><circle cx="121.0" cy="422.3" r="2.5"/><circle cx="644.8" cy="169.0" r="3.9"/><circle cx="212.9" cy="277.8" r="4.3"/><circle cx="105.6" cy="451.6" r="4.0"/><circle cx="122.0" cy="476.4" r="4.9"/><circle cx="282.4" cy="372.2" r="4.4"/><circle cx="795.8" cy="212.7" r="2.6"/><circle cx="674.6" cy="170.7" r="4.7"/><circle cx="342.4" cy="44.4" r="2.7"/><circle cx="8.8" cy="288.3" r="2.8"/><circle cx="24.9" cy="301.9" r="2.5"/><circle cx="852.8" cy="450.3" r="4.3"/><circle cx="415.2" cy="331.5" r="3.0"/><circle cx="305.8" cy="363.7" r="3.4"/><circle cx="238.4" cy="31.6" r="2.6"/><circle cx="247.6" cy="208.5" r="3.9"/><circle cx="87.7" cy="67.8" r="2.9"/><circle cx="305.1" cy="116.6" r="4.5"/><circle cx="372.5" cy="100.0" r="4.9"/><circle cx="303.4" cy="408.2" r="4.0"/><circle cx="806.1" cy="281.1" r="4.8"/><circle cx="851.5" cy="232.0" r="3.7"/><circle cx="53.2" cy="354.1" r="4.3"/><circle cx="330.1" cy="415.8" r="3.7"/><circle cx="658.1" cy="231.9" r="4.1"/><circle cx="721.5" cy="133.7" r="3.4"/><circle cx="149.2" cy="331.9" r="4.1"/><circle cx="138.7" cy="421.9" r="2.8"/><circle cx="456.6" cy="117.8" r="2.7"/><circle cx="893.3" cy="532.9" r="4.8"/><circle cx="526.3" cy="130.9" r="4.8"/><circle cx="757.9" cy="513.7" r="3.7"/><circle cx="631.3" cy="85.4" r="3.7"/><circle cx="803.0" cy="150.7" r="3.6"/><circle cx="700.2" cy="121.7" r="2.6"/><circle cx="840.4" cy="137.6" r="3.8"/><circle cx="19.7" cy="553.3" r="2.8"/><circle cx="454.0" cy="324.7" r="2.9"/><circle cx="235.1" cy="198.0" r="3.6"/><circle cx="567.9" cy="415.3" r="3.2"/><circle cx="587.1" cy="438.4" r="4.1"/><circle cx="208.8" cy="289.5" r="4.7"/><circle cx="924.6" cy="296.9" r="2.8"/><circle cx="306.5" cy="305.6" r="4.2"/><circle cx="873.8" cy="428.4" r="3.6"/><circle cx="552.6" cy="425.5" r="2.7"/><circle cx="620.8" cy="360.9" r="2.8"/><circle cx="250.9" cy="184.0" r="4.9"/><circle cx="240.9" cy="311.4" r="3.2"/><circle cx="194.9" cy="44.7" r="2.9"/><circle cx="609.9" cy="527.7" r="4.2"/><circle cx="520.1" cy="323.0" r="3.3"/><circle cx="114.6" cy="392.9" r="4.2"/><circle cx="841.5" cy="218.8" r="2.7"/><circle cx="300.6" cy="284.1" r="3.2"/><circle cx="201.0" cy="485.0" r="3.7"/><circle cx="758.8" cy="129.2" r="3.7"/><circle cx="333.9" cy="135.3" r="3.9"/><circle cx="227.2" cy="183.2" r="3.5"/><circle cx="98.7" cy="54.1" r="2.9"/><circle cx="217.7" cy="202.3" r="3.1"/><circle cx="70.3" cy="527.2" r="3.4"/><circle cx="476.7" cy="28.8" r="2.7"/><circle cx="647.8" cy="419.9" r="2.8"/><circle cx="322.6" cy="553.7" r="3.5"/><circle cx="724.8" cy="193.7" r="4.2"/><circle cx="537.4" cy="413.2" r="3.8"/><circle cx="725.0" cy="517.7" r="3.8"/><circle cx="783.1" cy="221.1" r="4.1"/><circle cx="543.2" cy="432.1" r="3.9"/><circle cx="605.6" cy="374.0" r="4.6"/><circle cx="549.4" cy="415.8" r="4.5"/><circle cx="355.9" cy="481.8" r="3.0"/><circle cx="799.1" cy="545.8" r="3.1"/><circle cx="263.9" cy="343.0" r="2.5"/><circle cx="647.0" cy="321.8" r="2.9"/><circle cx="88.2" cy="189.6" r="4.3"/><circle cx="87.8" cy="135.4" r="3.3"/><circle cx="626.9" cy="468.0" r="2.6"/><circle cx="719.6" cy="312.4" r="3.9"/><circle cx="618.9" cy="79.9" r="2.7"/><circle cx="638.7" cy="537.2" r="3.3"/><circle cx="696.5" cy="421.6" r="2.6"/><circle cx="361.4" cy="365.3" r="4.3"/><circle cx="603.2" cy="324.8" r="3.8"/><circle cx="715.5" cy="111.4" r="3.9"/><circle cx="438.4" cy="347.1" r="4.6"/><circle cx="437.8" cy="316.1" r="3.1"/><circle cx="759.6" cy="392.7" r="3.1"/><circle cx="740.3" cy="268.0" r="3.6"/><circle cx="780.6" cy="14.2" r="2.9"/><circle cx="44.4" cy="207.7" r="2.7"/><circle cx="172.8" cy="331.4" r="3.4"/><circle cx="841.8" cy="124.7" r="3.3"/><circle cx="39.6" cy="344.3" r="2.8"/><circle cx="686.6" cy="118.7" r="2.5"/><circle cx="344.0" cy="348.1" r="2.7"/><circle cx="653.8" cy="410.1" r="3.3"/><circle cx="144.4" cy="341.3" r="3.5"/><circle cx="350.5" cy="33.2" r="4.6"/><circle cx="434.0" cy="188.0" r="3.7"/><circle cx="194.4" cy="109.3" r="3.3"/><circle cx="289.8" cy="360.0" r="3.9"/><circle cx="402.8" cy="174.0" r="2.8"/><circle cx="816.8" cy="198.9" r="2.6"/><circle cx="587.9" cy="494.0" r="3.9"/><circle cx="710.2" cy="319.9" r="2.7"/><circle cx="883.6" cy="434.9" r="2.6"/><circle cx="483.9" cy="265.2" r="2.9"/><circle cx="841.7" cy="19.1" r="3.5"/><circle cx="793.3" cy="287.9" r="3.3"/><circle cx="606.5" cy="257.3" r="2.5"/><circle cx="351.6" cy="521.8" r="2.6"/><circle cx="360.2" cy="490.7" r="4.4"/><circle cx="567.4" cy="491.1" r="4.0"/><circle cx="881.6" cy="271.0" r="4.1"/><circle cx="804.7" cy="252.9" r="4.2"/><circle cx="295.1" cy="376.2" r="2.9"/><circle cx="314.0" cy="63.0" r="3.1"/><circle cx="355.2" cy="146.0" r="3.5"/><circle cx="147.5" cy="397.6" r="4.6"/><circle cx="710.3" cy="292.7" r="2.8"/><circle cx="410.8" cy="499.3" r="2.8"/><circle cx="125.8" cy="500.1" r="3.6"/><circle cx="538.3" cy="139.6" r="3.5"/><circle cx="723.5" cy="494.6" r="4.9"/><circle cx="73.5" cy="339.0" r="3.4"/><circle cx="422.4" cy="265.5" r="2.6"/><circle cx="9.0" cy="392.2" r="3.1"/><circle cx="257.3" cy="121.8" r="3.5"/><circle cx="732.4" cy="505.0" r="4.7"/><circle cx="267.5" cy="210.0" r="3.9"/><circle cx="281.0" cy="249.5" r="3.1"/><circle cx="625.5" cy="69.5" r="3.8"/><circle cx="164.3" cy="358.4" r="3.9"/><circle cx="732.2" cy="254.5" r="4.0"/><circle cx="844.8" cy="476.9" r="3.4"/><circle cx="844.6" cy="102.9" r="2.7"/><circle cx="291.1" cy="305.4" r="2.8"/><circle cx="6.4" cy="208.9" r="3.1"/><circle cx="409.9" cy="186.3" r="4.0"/><circle cx="582.7" cy="104.7" r="3.5"/><circle cx="7.7" cy="65.1" r="4.5"/><circle cx="20.9" cy="266.9" r="4.9"/><circle cx="609.0" cy="354.9" r="2.9"/><circle cx="898.9" cy="247.5" r="4.9"/><circle cx="508.8" cy="459.9" r="4.7"/><circle cx="509.2" cy="444.8" r="2.5"/><circle cx="456.5" cy="551.9" r="2.6"/><circle cx="34.4" cy="538.6" r="4.1"/><circle cx="880.6" cy="2.4" r="2.9"/><circle cx="679.6" cy="35.6" r="3.4"/><circle cx="556.5" cy="301.2" r="3.1"/><circle cx="648.1" cy="231.8" r="3.9"/><circle cx="430.4" cy="331.0" r="3.1"/><circle cx="239.9" cy="40.8" r="3.4"/><circle cx="796.8" cy="183.9" r="3.1"/><circle cx="318.0" cy="186.0" r="4.5"/><circle cx="166.4" cy="247.4" r="3.3"/><circle cx="22.4" cy="131.4" r="2.6"/><circle cx="154.4" cy="161.5" r="3.6"/><circle cx="359.6" cy="348.1" r="2.6"/><circle cx="79.8" cy="275.2" r="2.5"/><circle cx="577.1" cy="396.5" r="4.9"/><circle cx="726.7" cy="267.4" r="3.3"/><circle cx="637.7" cy="449.0" r="2.8"/><circle cx="450.7" cy="384.7" r="2.8"/><circle cx="244.6" cy="348.2" r="3.3"/><circle cx="430.3" cy="469.8" r="4.6"/><circle cx="759.2" cy="401.6" r="3.1"/><circle cx="638.7" cy="276.1" r="2.6"/><circle cx="231.3" cy="327.6" r="3.4"/><circle cx="72.3" cy="123.7" r="4.1"/><circle cx="337.4" cy="553.3" r="2.7"/><circle cx="744.4" cy="382.8" r="3.5"/><circle cx="450.7" cy="365.7" r="3.4"/><circle cx="863.0" cy="348.1" r="3.0"/><circle cx="93.3" cy="283.1" r="4.2"/><circle cx="452.7" cy="19.3" r="4.5"/><circle cx="509.4" cy="560.7" r="4.1"/><circle cx="434.8" cy="283.0" r="3.2"/><circle cx="173.4" cy="29.8" r="4.5"/><circle cx="565.3" cy="472.0" r="4.4"/><circle cx="836.2" cy="439.0" r="3.7"/><circle cx="412.8" cy="58.8" r="4.0"/><circle cx="708.0" cy="303.7" r="4.6"/><circle cx="396.8" cy="548.6" r="3.9"/><circle cx="259.1" cy="513.3" r="3.0"/><circle cx="60.2" cy="336.7" r="2.8"/><circle cx="427.2" cy="381.9" r="2.8"/><circle cx="598.0" cy="497.7" r="2.7"/><circle cx="768.6" cy="255.1" r="2.8"/><circle cx="745.4" cy="58.7" r="3.4"/><circle cx="889.3" cy="11.7" r="2.6"/><circle cx="901.5" cy="153.7" r="4.6"/><circle cx="808.5" cy="186.1" r="3.1"/><circle cx="200.5" cy="63.2" r="3.2"/><circle cx="101.3" cy="488.3" r="2.9"/><circle cx="795.5" cy="226.8" r="3.2"/><circle cx="489.4" cy="20.1" r="3.9"/><circle cx="850.8" cy="92.8" r="3.5"/><circle cx="510.5" cy="160.4" r="3.6"/><circle cx="596.1" cy="166.5" r="3.1"/><circle cx="365.4" cy="406.1" r="3.6"/><circle cx="309.8" cy="494.4" r="4.2"/><circle cx="145.6" cy="536.9" r="2.8"/><circle cx="334.7" cy="540.6" r="2.6"/><circle cx="118.4" cy="463.4" r="4.2"/><circle cx="346.0" cy="469.2" r="4.2"/><circle cx="536.2" cy="455.3" r="3.8"/><circle cx="347.4" cy="99.8" r="4.4"/><circle cx="193.2" cy="419.4" r="4.8"/><circle cx="4.8" cy="382.1" r="4.6"/><circle cx="803.2" cy="244.2" r="2.8"/><circle cx="206.9" cy="390.4" r="5.0"/><circle cx="829.7" cy="222.5" r="3.9"/><circle cx="377.8" cy="120.5" r="4.2"/><circle cx="873.4" cy="20.2" r="5.0"/><circle cx="345.8" cy="143.3" r="4.6"/><circle cx="318.4" cy="165.3" r="4.1"/><circle cx="58.2" cy="367.6" r="4.1"/><circle cx="346.0" cy="242.9" r="2.6"/><circle cx="360.6" cy="515.4" r="4.5"/><circle cx="128.0" cy="488.7" r="4.3"/><circle cx="418.8" cy="496.3" r="3.0"/><circle cx="25.0" cy="451.2" r="5.0"/><circle cx="263.6" cy="101.9" r="3.3"/><circle cx="545.6" cy="214.4" r="2.7"/><circle cx="344.7" cy="415.7" r="4.2"/><circle cx="843.5" cy="68.3" r="4.5"/><circle cx="520.5" cy="337.3" r="2.8"/><circle cx="763.1" cy="117.8" r="2.8"/><circle cx="671.3" cy="374.9" r="3.2"/><circle cx="397.5" cy="247.4" r="3.2"/><circle cx="617.6" cy="136.3" r="3.9"/><circle cx="415.3" cy="479.8" r="4.4"/><circle cx="695.2" cy="129.7" r="3.5"/><circle cx="729.9" cy="179.5" r="4.2"/><circle cx="406.5" cy="430.2" r="4.5"/><circle cx="203.9" cy="159.3" r="4.0"/><circle cx="654.9" cy="88.7" r="3.1"/><circle cx="844.5" cy="548.1" r="4.0"/><circle cx="693.7" cy="491.6" r="3.9"/><circle cx="167.3" cy="512.7" r="3.6"/><circle cx="162.5" cy="313.9" r="3.5"/><circle cx="104.4" cy="387.9" r="3.1"/><circle cx="199.8" cy="76.9" r="2.7"/><circle cx="336.3" cy="309.2" r="3.4"/><circle cx="597.7" cy="12.1" r="4.4"/><circle cx="155.6" cy="110.7" r="2.5"/><circle cx="682.7" cy="12.5" r="3.3"/><circle cx="159.2" cy="154.2" r="2.6"/><circle cx="345.9" cy="484.1" r="4.7"/><circle cx="708.5" cy="396.7" r="3.4"/><circle cx="178.1" cy="58.7" r="3.1"/><circle cx="63.0" cy="352.0" r="2.5"/><circle cx="899.9" cy="31.4" r="4.7"/><circle cx="828.9" cy="501.4" r="4.8"/><circle cx="559.3" cy="282.8" r="2.8"/><circle cx="725.9" cy="202.9" r="2.6"/><circle cx="708.6" cy="127.4" r="4.0"/><circle cx="280.1" cy="13.9" r="3.6"/><circle cx="113.9" cy="344.5" r="3.5"/><circle cx="189.2" cy="374.7" r="3.9"/><circle cx="263.2" cy="165.7" r="4.8"/><circle cx="843.2" cy="361.7" r="3.5"/><circle cx="211.2" cy="194.9" r="3.3"/><circle cx="411.6" cy="279.6" r="4.2"/><circle cx="236.7" cy="12.5" r="4.1"/><circle cx="608.9" cy="186.2" r="2.6"/><circle cx="640.0" cy="92.9" r="2.6"/><circle cx="168.5" cy="323.4" r="2.6"/><circle cx="129.5" cy="427.5" r="2.6"/><circle cx="481.8" cy="111.7" r="2.5"/><circle cx="253.1" cy="539.1" r="3.0"/><circle cx="425.8" cy="460.4" r="2.8"/><circle cx="909.7" cy="38.4" r="4.7"/><circle cx="928.1" cy="34.1" r="3.2"/><circle cx="829.5" cy="163.9" r="3.9"/><circle cx="789.0" cy="20.0" r="4.7"/><circle cx="521.2" cy="544.6" r="3.9"/><circle cx="574.8" cy="64.7" r="3.3"/><circle cx="754.9" cy="325.2" r="3.9"/><circle cx="13.9" cy="168.7" r="2.9"/><circle cx="835.0" cy="488.5" r="3.3"/><circle cx="610.1" cy="160.9" r="3.8"/><circle cx="910.3" cy="384.6" r="2.6"/><circle cx="515.3" cy="117.3" r="3.5"/><circle cx="161.2" cy="140.7" r="2.6"/><circle cx="236.0" cy="303.7" r="3.2"/><circle cx="545.7" cy="392.1" r="3.0"/><circle cx="642.7" cy="85.1" r="3.2"/><circle cx="141.3" cy="261.4" r="4.4"/><circle cx="213.2" cy="181.8" r="3.5"/><circle cx="584.4" cy="125.0" r="4.4"/><circle cx="769.9" cy="372.8" r="2.7"/><circle cx="929.6" cy="464.8" r="3.6"/><circle cx="257.6" cy="496.3" r="3.8"/><circle cx="41.6" cy="257.6" r="2.9"/><circle cx="702.4" cy="46.6" r="4.9"/><circle cx="145.8" cy="425.1" r="3.0"/><circle cx="228.5" cy="300.1" r="3.2"/><circle cx="536.9" cy="79.8" r="2.6"/><circle cx="678.8" cy="500.8" r="3.2"/><circle cx="753.4" cy="25.2" r="3.3"/><circle cx="396.3" cy="522.3" r="3.1"/><circle cx="818.6" cy="217.6" r="3.4"/><circle cx="461.4" cy="319.3" r="3.3"/><circle cx="506.5" cy="12.5" r="2.6"/><circle cx="163.4" cy="336.0" r="3.4"/><circle cx="104.1" cy="333.6" r="3.0"/><circle cx="883.8" cy="561.5" r="2.6"/><circle cx="128.4" cy="446.6" r="3.5"/><circle cx="620.2" cy="310.6" r="3.9"/><circle cx="486.2" cy="447.6" r="3.0"/><circle cx="649.0" cy="455.6" r="4.4"/><circle cx="184.7" cy="76.2" r="4.6"/><circle cx="161.8" cy="325.6" r="2.8"/><circle cx="450.4" cy="438.5" r="3.2"/><circle cx="343.2" cy="355.8" r="3.4"/><circle cx="803.7" cy="46.2" r="2.8"/><circle cx="911.9" cy="51.2" r="2.7"/><circle cx="280.5" cy="428.6" r="3.6"/><circle cx="854.8" cy="37.0" r="3.4"/><circle cx="617.7" cy="88.6" r="4.6"/><circle cx="567.5" cy="289.9" r="2.9"/><circle cx="892.7" cy="521.7" r="3.6"/><circle cx="275.1" cy="155.9" r="2.7"/><circle cx="360.2" cy="501.6" r="3.9"/><circle cx="682.0" cy="489.0" r="3.1"/><circle cx="448.7" cy="28.1" r="2.9"/><circle cx="379.5" cy="109.8" r="3.4"/><circle cx="94.2" cy="142.2" r="4.0"/><circle cx="548.6" cy="383.4" r="3.5"/><circle cx="819.6" cy="552.2" r="4.9"/><circle cx="220.7" cy="12.8" r="4.5"/><circle cx="630.7" cy="451.6" r="3.1"/><circle cx="210.1" cy="15.7" r="3.6"/><circle cx="212.3" cy="403.9" r="3.6"/><circle cx="325.7" cy="489.6" r="4.4"/><circle cx="349.9" cy="491.9" r="2.5"/><circle cx="306.4" cy="418.3" r="2.9"/><circle cx="457.0" cy="32.1" r="3.0"/><circle cx="86.7" cy="478.4" r="4.4"/><circle cx="479.7" cy="257.9" r="2.6"/><circle cx="343.1" cy="451.1" r="3.6"/><circle cx="371.5" cy="353.8" r="4.6"/><circle cx="299.5" cy="388.1" r="2.9"/><circle cx="153.0" cy="38.9" r="3.0"/><circle cx="756.1" cy="43.3" r="3.7"/><circle cx="125.9" cy="333.7" r="3.0"/><circle cx="267.7" cy="197.8" r="2.5"/><circle cx="792.6" cy="350.0" r="3.5"/><circle cx="371.5" cy="131.4" r="3.6"/><circle cx="366.6" cy="375.5" r="4.4"/><circle cx="187.6" cy="26.9" r="2.6"/><circle cx="37.8" cy="5.1" r="3.0"/><circle cx="551.8" cy="72.6" r="3.5"/><circle cx="659.2" cy="98.2" r="2.6"/><circle cx="335.1" cy="437.2" r="3.5"/><circle cx="292.9" cy="144.0" r="3.6"/><circle cx="767.6" cy="91.4" r="3.5"/><circle cx="798.5" cy="402.8" r="4.1"/><circle cx="854.8" cy="221.8" r="2.5"/><circle cx="687.4" cy="360.0" r="3.6"/><circle cx="422.5" cy="339.1" r="2.9"/><circle cx="135.3" cy="333.5" r="3.4"/><circle cx="327.3" cy="562.6" r="4.5"/><circle cx="365.2" cy="337.4" r="4.3"/><circle cx="463.4" cy="433.5" r="3.8"/><circle cx="366.9" cy="468.9" r="4.8"/><circle cx="785.5" cy="87.5" r="3.9"/><circle cx="260.1" cy="235.8" r="2.6"/><circle cx="847.0" cy="492.8" r="4.1"/><circle cx="453.2" cy="2.5" r="4.4"/><circle cx="141.7" cy="495.3" r="4.2"/><circle cx="609.4" cy="6.9" r="3.6"/><circle cx="7.1" cy="498.6" r="3.2"/><circle cx="879.4" cy="525.6" r="5.0"/><circle cx="355.2" cy="339.8" r="2.6"/><circle cx="70.3" cy="272.4" r="4.5"/><circle cx="157.6" cy="379.1" r="3.3"/><circle cx="573.6" cy="129.3" r="4.7"/><circle cx="640.0" cy="458.0" r="2.5"/><circle cx="657.6" cy="14.5" r="2.6"/><circle cx="560.2" cy="31.2" r="2.5"/><circle cx="853.5" cy="115.1" r="2.7"/><circle cx="361.8" cy="213.3" r="3.1"/><circle cx="213.8" cy="318.3" r="3.3"/><circle cx="446.7" cy="10.8" r="3.0"/><circle cx="656.5" cy="251.7" r="3.9"/><circle cx="432.3" cy="494.1" r="3.6"/><circle cx="282.5" cy="144.4" r="3.8"/><circle cx="132.4" cy="412.3" r="2.6"/><circle cx="736.4" cy="59.1" r="2.6"/><circle cx="562.9" cy="210.8" r="4.9"/><circle cx="387.9" cy="418.7" r="3.3"/><circle cx="497.8" cy="26.0" r="3.2"/><circle cx="751.8" cy="519.6" r="2.8"/><circle cx="620.3" cy="51.2" r="4.0"/><circle cx="360.9" cy="97.7" r="4.3"/><circle cx="557.3" cy="230.8" r="2.5"/><circle cx="404.1" cy="556.8" r="2.6"/><circle cx="750.3" cy="354.6" r="2.6"/><circle cx="20.4" cy="229.1" r="2.9"/><circle cx="888.5" cy="514.6" r="2.9"/><circle cx="544.0" cy="403.8" r="3.0"/><circle cx="295.5" cy="254.4" r="3.5"/><circle cx="332.9" cy="481.7" r="3.2"/><circle cx="733.6" cy="385.7" r="4.7"/><circle cx="864.1" cy="180.0" r="2.6"/><circle cx="192.5" cy="238.3" r="4.2"/><circle cx="88.5" cy="125.9" r="2.8"/><circle cx="929.0" cy="319.2" r="2.9"/><circle cx="505.4" cy="200.4" r="3.9"/><circle cx="265.6" cy="424.7" r="3.3"/><circle cx="523.5" cy="458.8" r="5.0"/><circle cx="796.5" cy="333.3" r="4.1"/><circle cx="354.4" cy="316.5" r="3.2"/><circle cx="202.5" cy="94.9" r="4.1"/><circle cx="802.2" cy="85.2" r="3.8"/><circle cx="436.0" cy="131.9" r="3.4"/><circle cx="347.9" cy="533.8" r="3.0"/><circle cx="751.9" cy="139.8" r="3.4"/><circle cx="364.7" cy="18.6" r="3.3"/><circle cx="795.0" cy="297.6" r="3.4"/><circle cx="70.5" cy="545.0" r="3.0"/><circle cx="877.7" cy="258.9" r="4.0"/><circle cx="114.3" cy="70.9" r="2.8"/><circle cx="849.0" cy="429.1" r="4.5"/><circle cx="654.8" cy="342.9" r="2.6"/><circle cx="567.6" cy="300.6" r="2.7"/><circle cx="315.3" cy="313.4" r="2.9"/><circle cx="524.6" cy="160.1" r="3.4"/><circle cx="576.8" cy="290.0" r="4.1"/><circle cx="585.4" cy="540.5" r="4.1"/><circle cx="823.8" cy="176.1" r="3.9"/><circle cx="322.9" cy="258.1" r="3.6"/><circle cx="365.2" cy="387.8" r="2.9"/><circle cx="860.4" cy="445.7" r="2.9"/><circle cx="470.6" cy="265.2" r="3.6"/><circle cx="924.5" cy="306.1" r="4.2"/><circle cx="832.9" cy="46.1" r="3.1"/><circle cx="801.9" cy="17.6" r="3.6"/><circle cx="674.4" cy="459.4" r="2.8"/><circle cx="585.2" cy="308.6" r="4.2"/><circle cx="520.7" cy="468.1" r="2.8"/><circle cx="63.8" cy="127.7" r="3.1"/><circle cx="186.2" cy="52.7" r="2.8"/><circle cx="444.6" cy="103.5" r="3.3"/><circle cx="806.0" cy="323.8" r="2.5"/><circle cx="454.8" cy="96.9" r="4.4"/><circle cx="341.4" cy="25.6" r="4.8"/><circle cx="131.3" cy="191.8" r="2.8"/><circle cx="115.6" cy="3.9" r="4.2"/><circle cx="600.7" cy="189.7" r="4.3"/></g></svg>

<div class="pill" style="left:422px;top:118px;width:82px;height:27px"></div>
<div class="pill" style="left:422px;top:469px;width:82px;height:27px"></div>
<div class="pill" style="left:422px;top:619px;width:82px;height:26px"></div>

<!-- incoming -->
<div class="a" style="left:27px;top:129px;width:173px;height:30px;background:#343434;border-radius:0 7px 7px 7px;border-top:1px solid #3c3c3c"></div>
<svg style="left:0;top:0" width="40" height="160"><path d="M27.5 129 H22.5 Q21 129 22 130.2 L27.5 138 Z" fill="#343434"/><path d="M27.5 129.5 H22.5 L27.5 137" stroke="#3c3c3c" stroke-width="1" fill="none"/></svg>

<!-- outgoing -->
<div class="out" style="left:791px;top:171px;width:114px;height:31px;border-radius:7px 0 7px 7px"></div>
<div class="out" style="left:480px;top:205px;width:425px;height:30px"></div>
<div class="out" style="left:332px;top:237px;width:573px;height:221px"></div>
<div class="out" style="left:517px;top:509px;width:388px;height:99px;border-radius:7px 0 7px 7px"></div>
<div class="out" style="left:565px;top:659px;width:340px;height:11px;border-radius:7px 0 0 0"></div>
<svg style="left:0;top:0" width="930" height="680">
  <path d="M904.5 171 H910 Q911.8 171 910.6 172.4 L904.5 179 Z" fill="#005c4b"/>
  <path d="M904.5 509 H910 Q911.8 509 910.6 510.4 L904.5 517 Z" fill="#005c4b"/>
  <path d="M904.5 659 H910 Q911.8 659 910.6 660.4 L904.5 667 Z" fill="#005c4b"/>
</svg>
<div class="a" style="left:574px;top:668px;width:322px;height:2px;background:#eeeeee;border-radius:2px 2px 0 0"></div>

<!-- quote -->
<div class="a" style="left:525px;top:518px;width:372px;height:60px;background:#1d6b5c;border-radius:5px;overflow:hidden">
  <div class="a" style="left:0;top:0;width:4px;height:60px;background:#06cf9c"></div>
</div>
<div class="a" style="left:839px;top:520px;width:56px;height:54px;background:#fbfbfb;border-radius:3px;overflow:hidden">
  <div class="a" style="left:1px;top:1.5px;width:14px;height:1px;background:#9a9a9a"></div>
  <div class="a" style="left:1px;top:3.5px;width:10px;height:1px;background:#b0b0b0"></div>
  <div class="a" style="left:1px;top:5.5px;width:12px;height:1px;background:#b8b8b8"></div>
  <div class="a" style="left:26px;top:1.5px;width:12px;height:1px;background:#7a7a7a"></div>
  <div class="a" style="left:27px;top:3.5px;width:10px;height:1px;background:#a8a8a8"></div>
  <div class="a" style="left:2px;top:9.5px;width:30px;height:1px;background:#b8b8b8"></div>
  <div class="a" style="left:34px;top:9.5px;width:20px;height:1px;background:#b0b0b0"></div>
  <div class="a" style="left:2px;top:11.5px;width:50px;height:1px;background:#c4c4c4"></div>
  <div class="a" style="left:2px;top:13.5px;width:16px;height:1px;background:#a8a8a8"></div>
  <div class="a" style="left:24px;top:13.5px;width:28px;height:1px;background:#c8c8c8"></div>
  <div class="a" style="left:2px;top:16px;width:22px;height:1px;background:#b4b4b4"></div>
  <div class="a" style="left:2px;top:18px;width:18px;height:1px;background:#b8b8b8"></div>
  <div class="a" style="left:28px;top:18px;width:24px;height:1px;background:#c8c8c8"></div>
  <div class="a" style="left:1px;top:21px;width:52px;height:1px;background:#c0c0c0"></div>
  <div class="a" style="left:2px;top:25px;width:10px;height:1px;background:#9c9c9c"></div>
  <div class="a" style="left:2px;top:27px;width:14px;height:1px;background:#b0b0b0"></div>
  <div class="a" style="left:40px;top:25px;width:12px;height:1px;background:#c0c0c0"></div>
  <div class="a" style="left:2px;top:30.5px;width:48px;height:1px;background:#aaaaaa"></div>
  <div class="a" style="left:2px;top:32.5px;width:44px;height:1px;background:#b8b8b8"></div>
  <div class="a" style="left:2px;top:34.5px;width:30px;height:1px;background:#c0c0c0"></div>
  <div class="a" style="left:2px;top:37px;width:8px;height:1px;background:#8a8a8a"></div>
  <div class="a" style="left:2px;top:39px;width:12px;height:1px;background:#a0a0a0"></div>
  <div class="a" style="left:14px;top:39px;width:26px;height:1px;background:#c4c4c4"></div>
  <div class="a" style="left:2px;top:41px;width:8px;height:1px;background:#9a9a9a"></div>
  <div class="a" style="left:2px;top:43.5px;width:52px;height:1px;background:#b4b4b4"></div>
  <div class="a" style="left:2px;top:46.5px;width:10px;height:1px;background:#a8a8a8"></div>
  <div class="a" style="left:2px;top:48.5px;width:14px;height:1px;background:#b0b0b0"></div>
  <div class="a" style="left:1px;top:51px;width:52px;height:1px;background:#c8c8c8"></div>
</div>
<svg style="left:0;top:0" width="930" height="560">
  <path d="M536.2 542 H540.6 L544.2 545.4 V550.3 Q544.2 551.4 543.1 551.4 H537.3 Q536.2 551.4 536.2 550.3 V543.1 Q536.2 542 537.3 542 Z M540.4 542 V544.3 Q540.4 545.6 541.7 545.6 H544" stroke="#d2ddd9" stroke-width="1" fill="none"/>
</svg>

<!-- ticks -->
<svg style="left:0;top:0" width="930" height="620">
  <g stroke="#53bdeb" stroke-width="1.4" fill="none" stroke-linecap="round" stroke-linejoin="round">
    <path transform="translate(885,186)" d="M1.1 5 L3.5 7.6 L8.8 1.1 M6.4 7.3 L12.6 1.1"/>
    <path transform="translate(885,219)" d="M1.1 5 L3.5 7.6 L8.8 1.1 M6.4 7.3 L12.6 1.1"/>
    <path transform="translate(885,442)" d="M1.1 5 L3.5 7.6 L8.8 1.1 M6.4 7.3 L12.6 1.1"/>
    <path transform="translate(885,592)" d="M1.1 5 L3.5 7.6 L8.8 1.1 M6.4 7.3 L12.6 1.1"/>
  </g>
</svg>

<!-- scroll down -->
<div class="a" style="left:873px;top:609px;width:40px;height:43px;border-radius:8px;background:#292929;box-shadow:0 0 1px rgba(0,0,0,.15)"></div>
<svg style="left:0;top:0" width="930" height="660">
  <path d="M892.5 622 V637.5 M885 630.5 L892.5 638 L900 630.5" stroke="#f2f2f2" stroke-width="1.2" fill="none"/>
</svg>

<!-- input bar -->
<div class="a" style="left:0;top:670px;width:930px;height:1px;background:#1e1e1e"></div>
<div class="a" style="left:0;top:671px;width:930px;height:49px;background:#2c2c2c"></div>
<div class="a" style="left:103px;top:685px;width:1px;height:19px;background:#d8d8d8"></div>
<svg style="left:0;top:0" width="930" height="720">
  <g stroke="#e2e2e2" stroke-width="1.2" fill="none" stroke-linecap="round">
    <circle cx="23" cy="694.5" r="7.6"/>
    <path d="M19.2 696.3 Q23 700.4 26.8 696.3 Q23 698.2 19.2 696.3 Z" fill="#e2e2e2" stroke-width="0.9"/>
    <path d="M20.5 690.4 Q20.7 692.1 22.2 692.4 Q20.7 692.7 20.5 694.4 Q20.3 692.7 18.8 692.4 Q20.3 692.1 20.5 690.4 Z M25.5 690.4 Q25.7 692.1 27.2 692.4 Q25.7 692.7 25.5 694.4 Q25.3 692.7 23.8 692.4 Q25.3 692.1 25.5 690.4 Z" stroke-width="0.6" fill="#e2e2e2"/>
    <path d="M60.5 694.5 L69.3 687.2 Q71.8 685.4 73.2 687.8 Q74.3 690 72.3 692 L64.6 699.8 Q62.8 701.2 61.4 699.6 Q60.3 697.9 62 696.3 L68.3 690.6"/>
    <rect x="900" y="687.5" width="6" height="10.2" rx="3"/>
    <path d="M897.3 694 Q897.5 700 903 700 Q908.5 700 908.7 694 M903 700 V703"/>
  </g>
</svg>

<!-- taskbar -->
<div class="a" style="left:0;top:720px;width:930px;height:1px;background:#404044"></div>
<div class="a" style="left:0;top:721px;width:930px;height:46px;background:#1e1d23"></div>
<!-- windows logo -->
<div class="a" style="left:61px;top:733px;width:11px;height:11px;background:linear-gradient(160deg,#7be0fd,#3fbdf6)"></div>
<div class="a" style="left:73px;top:733px;width:11px;height:11px;background:linear-gradient(160deg,#6ddafd,#34b4f2)"></div>
<div class="a" style="left:61px;top:745px;width:11px;height:11px;background:linear-gradient(160deg,#3cbcf6,#1a9de6)"></div>
<div class="a" style="left:73px;top:745px;width:11px;height:11px;background:linear-gradient(160deg,#33b4f2,#1595e2)"></div>
<svg style="left:0;top:0" width="930" height="767">
  <!-- search -->
  <circle cx="115.3" cy="741.7" r="7.3" fill="#46464c" stroke="#d6d6d6" stroke-width="2"/>
  <path d="M120.6 747 L126.5 753" stroke="#d6d6d6" stroke-width="2.2" stroke-linecap="round"/>
  <!-- task view -->
  <rect x="155" y="733" width="18" height="16" rx="1.5" fill="#e6e6e6"/>
  <rect x="149" y="739" width="18" height="16" rx="1.5" fill="#6a6a6a" opacity="0.92"/>
  <rect x="155" y="739" width="12" height="10" fill="#b4b4b4"/>
  <!-- edge -->
  <defs>
    <linearGradient id="eg" x1="0" y1="0" x2="1" y2="0.4"><stop offset="0" stop-color="#2aa6ee"/><stop offset="0.5" stop-color="#2bc3c8"/><stop offset="1" stop-color="#5fe050"/></linearGradient><linearGradient id="eb" x1="0" y1="0" x2="0.3" y2="1"><stop offset="0" stop-color="#2196ea"/><stop offset="1" stop-color="#1078d6"/></linearGradient>
    <linearGradient id="wa" x1="0" y1="0" x2="0" y2="1"><stop offset="0" stop-color="#2ad36b"/><stop offset="1" stop-color="#1fbf5a"/></linearGradient>
  </defs>
  <g transform="translate(193,732)">
    <circle cx="12" cy="12" r="12" fill="url(#eb)"/>
    <path d="M5.5,9.3 Q3.2,15.5 8,20.8 Q12,24.4 16.5,23 Q20.3,21.5 22.6,17.6 Q18.5,20 14.6,17.8 Q11.3,15.3 12.4,11.2 Z" fill="#1059b4"/>
    <path d="M0.1,11.6 A12,12 0 0 1 24,12.2 Q24,15.8 22.4,17.6 Q18.5,19.8 15,17.6 Q12.6,15.8 13.4,12.6 Q14,10.4 12.5,9.3 Q9,7 5,8.3 Q2,9.6 0.1,11.6 Z" fill="url(#eg)"/>
    <circle cx="13.6" cy="12.6" r="2.1" fill="#1c1c21"/>
    <path d="M14.6,17.6 Q18.5,20.2 22.5,17.7" stroke="#1c1c21" stroke-width="0.8" fill="none" opacity="0.7"/>
  </g>
  <rect x="202" y="760" width="6" height="3" rx="1.5" fill="#9a9a9e"/>
  <!-- folder -->
  <path d="M237 736 Q237 733 240 733 H247 L250 736 H259 Q261 736 261 738 V753 Q261 755 259 755 H239 Q237 755 237 753 Z" fill="#e8b33a"/>
  <path d="M237 739 H261 V753 Q261 755 259 755 H239 Q237 755 237 753 Z" fill="#f9cf50"/>
  <rect x="246" y="748" width="10" height="7" rx="1.2" fill="#1878d0"/>
  <rect x="246" y="760" width="6" height="3" rx="1.5" fill="#9a9a9e"/>
  <!-- whatsapp -->
  <rect x="273.5" y="724.5" width="39" height="39" rx="5" fill="#2a2a30" stroke="#36363c" stroke-width="1"/>
  <circle cx="293" cy="743.6" r="10.6" fill="none" stroke="#29d26a" stroke-width="2.1"/>
  <path d="M285.2 750.2 L281.6 755.9 L288.2 753.6 Z" fill="#29d26a" stroke="#29d26a" stroke-width="1" stroke-linejoin="round"/>
  <path d="M284.6 751.3 L283.4 754 L286.8 752.8 Z" fill="#2a2a30"/>
  <path transform="translate(287,738.5)" d="M2.3,0.6 Q3.6,0.2 4.2,1.6 L5,3.6 Q5.3,4.5 4.6,5 L4,5.5 Q5,8.2 7.6,9.4 L8.2,8.8 Q8.8,8.3 9.6,8.6 L11.8,9.6 Q13,10.2 12.5,11.5 Q11.6,13 9.6,12.8 Q5.5,12.2 2.4,8.6 Q0,5.6 0.4,2.8 Q0.7,1.1 2.3,0.6 Z" fill="#29d26a"/>
  <circle cx="302" cy="735" r="8.2" fill="#ef8a6b"/>
  <rect x="285" y="760" width="16" height="3.2" rx="1.6" fill="#f08a6b"/>
  <!-- outlook -->
  <defs><linearGradient id="ol" x1="0" y1="0" x2="0.6" y2="1"><stop offset="0" stop-color="#fde7a0"/><stop offset="0.5" stop-color="#f4b83a"/><stop offset="1" stop-color="#e49a1c"/></linearGradient></defs>
  <rect x="325" y="732" width="22" height="22" rx="1.5" fill="url(#ol)"/>
  <path d="M329 754 L339 745 L347 750 V754 Z" fill="#fdf0d0" opacity="0.9"/>
  <ellipse cx="332" cy="741.5" rx="3.6" ry="5" fill="#fff4dc" stroke="#e8820e" stroke-width="2.6"/>
  <circle cx="343" cy="740.5" r="3.2" fill="#fbe8c0" stroke="#e0a040" stroke-width="0.9"/>
  <rect x="334" y="760" width="6" height="3" rx="1.5" fill="#9a9a9e"/>
  <!-- sticky notes -->
  <rect x="370" y="733" width="22" height="22" rx="1.5" fill="#fdd400"/>
  <path d="M381 744 H391.5 L381 754.5 Z" fill="#3a3a36"/><path d="M391.5 744 V753.5 Q391.5 754.5 390.5 754.5 H381 Z" fill="#e8b010"/>
  <!-- chrome -->
  <circle cx="425" cy="744" r="12" fill="#1ea05a"/>
  <path d="M414.6 738 A12 12 0 0 1 435.4 738 L425 738 L419 744 Z" fill="#e0402f"/>
  <path d="M425 738 L435.4 738 A12 12 0 0 1 425 756 L429 748.5 Z" fill="#fcc52c"/>
  <circle cx="425" cy="744" r="5.7" fill="#ffffff"/>
  <circle cx="425" cy="744" r="4.5" fill="#2a7de8"/>
  <rect x="422" y="760" width="6" height="3" rx="1.5" fill="#9a9a9e"/>
  <!-- tray -->
  <path d="M719.8 747 L725.2 741.6 L730.6 747" stroke="#eeeeee" stroke-width="1.2" fill="none"/>
  <g stroke="#f0f0f0" stroke-width="1.1" fill="none">
    <path d="M803.8 736.5 H794.8 Q793.6 736.5 793.6 737.7 V747.3 Q793.6 748.5 794.8 748.5 H804.3"/>
    <path d="M796.5 751.5 H804.5 M799 748.5 V751.5 M802 748.5 V751.5"/>
    <rect x="804.6" y="736.5" width="4.2" height="5.6" rx="0.8"/>
    <path d="M806.7 742.1 V752"/>
    <path d="M817.5 741.6 H820 L823.8 738.4 V749.4 L820 746.4 H817.5 Z"/>
    <path d="M826.5 741.3 L832 746.8 M832 741.3 L826.5 746.8"/>
  </g>
</svg>

<div class="t" style="left:67px;top:65.15px;font-size:14px;color:#f2f2f2;font-weight:bold;transform:scaleX(0.9291);">Amarnath Avyaya Feed TLG</div>
<div class="t" style="left:432px;top:126.34px;font-size:12px;color:#d3d7da;font-weight:normal;transform:scaleX(0.9938);-webkit-text-stroke:0.15px #d3d7da;">26-09-2025</div>
<div class="t" style="left:432px;top:476.84px;font-size:12px;color:#d3d7da;font-weight:normal;transform:scaleX(0.9938);-webkit-text-stroke:0.15px #d3d7da;">08-10-2025</div>
<div class="t" style="left:432px;top:627.34px;font-size:12px;color:#d3d7da;font-weight:normal;transform:scaleX(0.9938);-webkit-text-stroke:0.15px #d3d7da;">14-10-2025</div>
<div class="t" style="left:35px;top:137.15px;font-size:14px;color:#f5f7f7;font-weight:normal;transform:scaleX(1.0134);-webkit-text-stroke:0.2px #f5f7f7;">Go die production</div>
<div class="t" style="left:172px;top:143.67px;font-size:10.2px;color:#a8a8a8;font-weight:normal;transform:scaleX(0.9218);">09:29</div>
<div class="t" style="left:799px;top:180.15px;font-size:14px;color:#f5f7f7;font-weight:normal;transform:scaleX(0.9575);-webkit-text-stroke:0.2px #f5f7f7;">Ok sir</div>
<div class="t" style="left:857px;top:185.67px;font-size:10.2px;color:#99b9b1;font-weight:normal;transform:scaleX(0.8433);">10:51</div>
<div class="t" style="left:488px;top:213.15px;font-size:14px;color:#f5f7f7;font-weight:normal;transform:scaleX(0.9729);-webkit-text-stroke:0.2px #f5f7f7;">Sir iske against mein advance kab tak expect kr skte hai?</div>
<div class="t" style="left:857px;top:218.67px;font-size:10.2px;color:#99b9b1;font-weight:normal;transform:scaleX(0.8433);">10:51</div>
<div class="t" style="left:339.8px;top:245.15px;font-size:14px;color:#f5f7f7;font-weight:normal;transform:scaleX(0.9349);-webkit-text-stroke:0.2px #f5f7f7;">Dear Sir</div>
<div class="t" style="left:339.8px;top:264.15px;font-size:14px;color:#f5f7f7;font-weight:normal;transform:scaleX(0.9995);-webkit-text-stroke:0.2px #f5f7f7;">Thanks for your order. As suggested by you we are proceeding with compression ratio &amp;</div>
<div class="t" style="left:339.8px;top:283.15px;font-size:14px;color:#f5f7f7;font-weight:normal;transform:scaleX(0.9692);-webkit-text-stroke:0.2px #f5f7f7;">thickness (CR = 1:12.85  45/50 :  , Die Thickness = 50mm , Hole size = 3.5mm).</div>
<div class="t" style="left:339.8px;top:321.15px;font-size:14px;color:#f5f7f7;font-weight:normal;transform:scaleX(0.9901);-webkit-text-stroke:0.2px #f5f7f7;">Please make sure your feed formulation doesn’t changes after die supply as it may</div>
<div class="t" style="left:339.8px;top:340.15px;font-size:14px;color:#f5f7f7;font-weight:normal;transform:scaleX(0.9988);-webkit-text-stroke:0.2px #f5f7f7;">hamper your</div>
<div class="t" style="left:339.8px;top:359.15px;font-size:14px;color:#f5f7f7;font-weight:normal;transform:scaleX(1.0091);-webkit-text-stroke:0.2px #f5f7f7;">production output &amp; pellet quality. Also if there is any chance of change in feed</div>
<div class="t" style="left:339.8px;top:378.15px;font-size:14px;color:#f5f7f7;font-weight:normal;transform:scaleX(1.0293);-webkit-text-stroke:0.2px #f5f7f7;">formulation in</div>
<div class="t" style="left:339.8px;top:397.15px;font-size:14px;color:#f5f7f7;font-weight:normal;transform:scaleX(0.9930);-webkit-text-stroke:0.2px #f5f7f7;">upcoming days, then please discuss &amp; share your required die specification within 2-3</div>
<div class="t" style="left:339.8px;top:416.15px;font-size:14px;color:#f5f7f7;font-weight:normal;transform:scaleX(1.0157);-webkit-text-stroke:0.2px #f5f7f7;">working</div>
<div class="t" style="left:339.8px;top:435.15px;font-size:14px;color:#f5f7f7;font-weight:normal;transform:scaleX(0.9771);-webkit-text-stroke:0.2px #f5f7f7;">days from now.</div>
<div class="t" style="left:857px;top:441.67px;font-size:10.2px;color:#99b9b1;font-weight:normal;transform:scaleX(0.8894);">11:04</div>
<div class="t" style="left:535px;top:523.84px;font-size:12px;color:#06cf9c;font-weight:normal;transform:scaleX(0.9136);-webkit-text-stroke:0.45px #06cf9c;">You</div>
<div class="t" style="left:549.5px;top:540.84px;font-size:12px;color:#d2ddd9;font-weight:normal;transform:scaleX(0.9340);">33028, Quotation, AVYAYA FARMS AND FEEDS , TLG,</div>
<div class="t" style="left:535px;top:554.84px;font-size:12px;color:#d2ddd9;font-weight:normal;transform:scaleX(1.0007);">Dated-25-09-2025.pdf</div>
<div class="t" style="left:525px;top:585.15px;font-size:14px;color:#f5f7f7;font-weight:normal;transform:scaleX(0.9872);-webkit-text-stroke:0.2px #f5f7f7;">Sir, any update on the payment?</div>
<div class="t" style="left:857px;top:591.67px;font-size:10.2px;color:#99b9b1;font-weight:normal;transform:scaleX(0.8826);">10:38</div>
<div class="t" style="left:105px;top:687.15px;font-size:14px;color:#8d8d8d;font-weight:normal;transform:scaleX(0.9248);">Type a message</div>
<div class="t" style="left:751.5px;top:731.84px;font-size:12px;color:#eeeeee;font-weight:normal;transform:scaleX(0.8845);">ENG</div>
<div class="t" style="left:757px;top:747.14px;font-size:12px;color:#eeeeee;font-weight:normal;transform:scaleX(1.0000);">IN</div>
<div class="t" style="left:867.7px;top:730.84px;font-size:12px;color:#eeeeee;font-weight:normal;transform:scaleX(0.9484);">09:39:28</div>
<div class="t" style="left:849.6px;top:746.84px;font-size:12px;color:#eeeeee;font-weight:normal;transform:scaleX(1.0166);">25-10-2025</div>
<div class="t" style="left:299px;top:729px;font-size:11.5px;color:#151515">9</div>
</body></html>
